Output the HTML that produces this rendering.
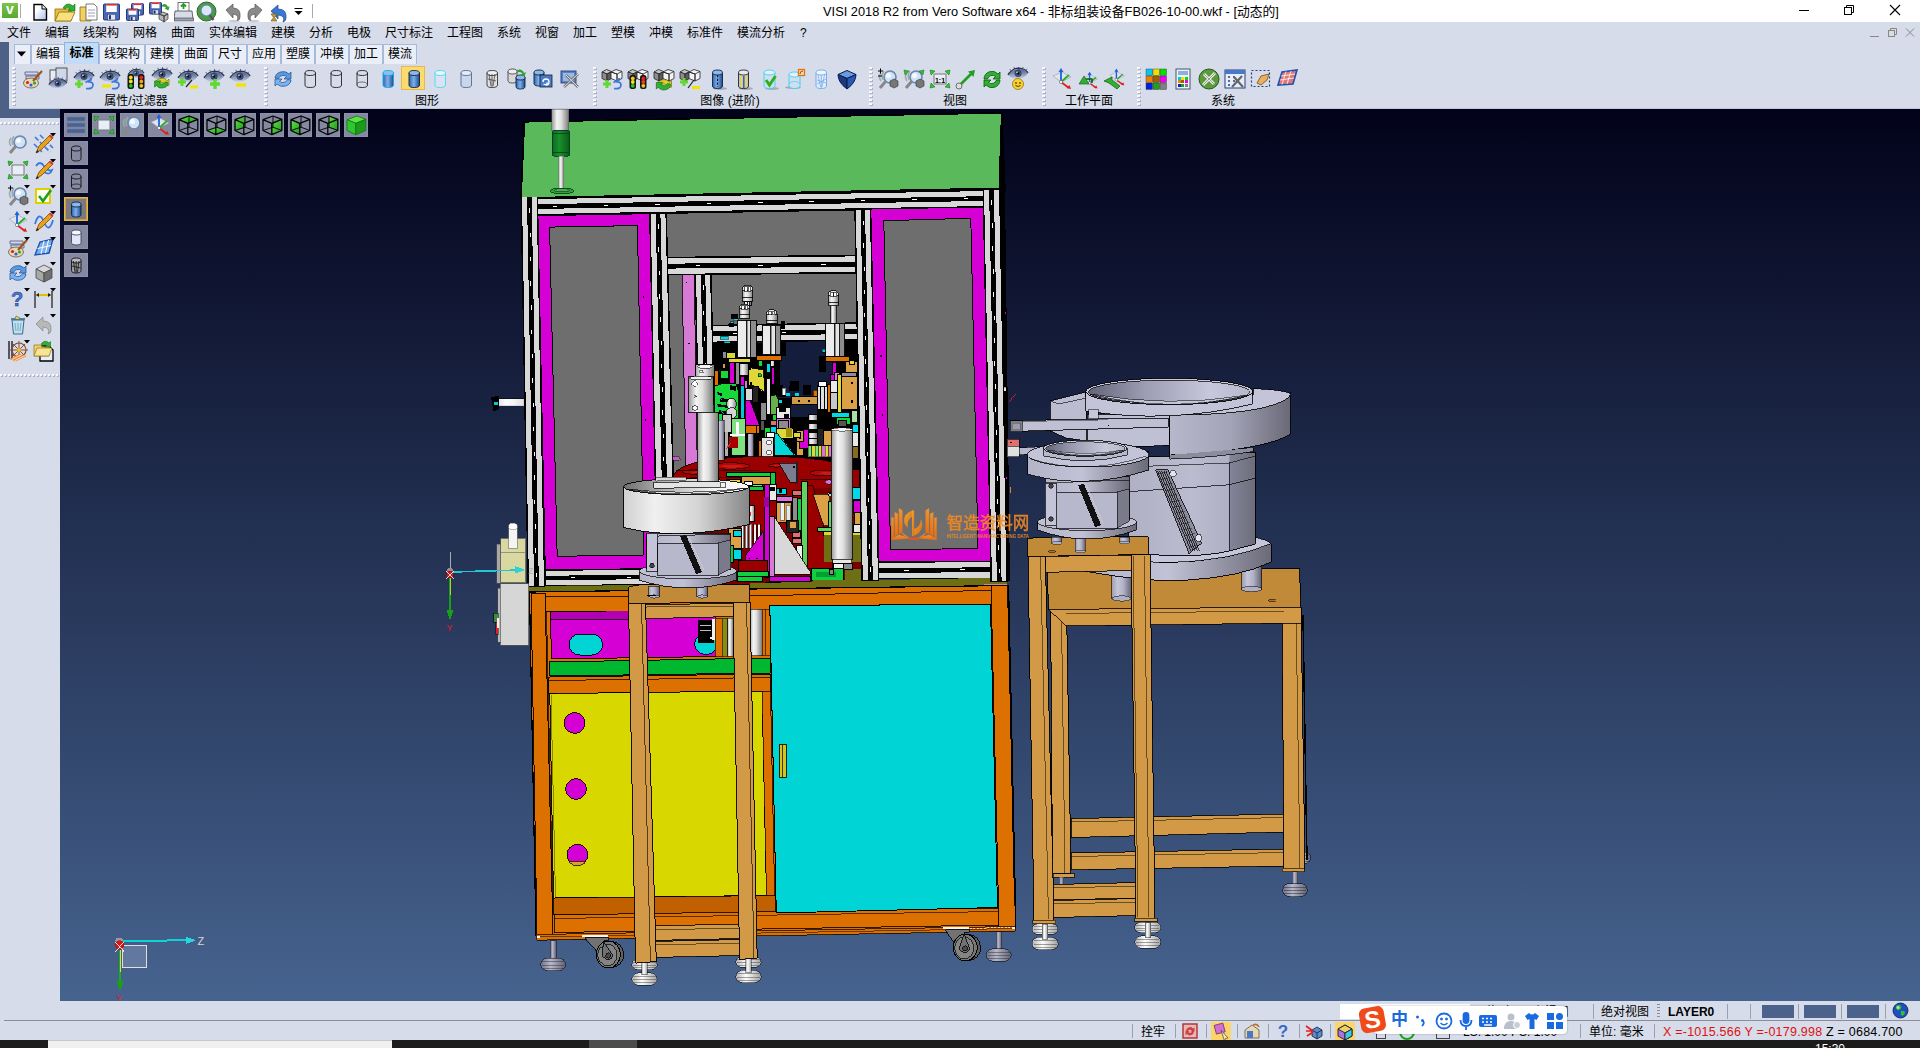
<!DOCTYPE html>
<html lang="zh-CN">
<head>
<meta charset="utf-8">
<title>VISI 2018 R2 from Vero Software x64</title>
<style>
*{box-sizing:border-box;margin:0;padding:0}
html,body{width:1920px;height:1048px;overflow:hidden;background:#d6dcea;
 font-family:"Liberation Sans","Noto Sans CJK SC",sans-serif;font-size:12px;color:#000}
.abs{position:absolute}
#titlebar{position:absolute;left:0;top:0;width:1920px;height:22px;background:#fff}
#title{position:absolute;left:823px;top:4px;width:456px;text-align:center;font-size:12.8px;line-height:16px;white-space:nowrap;letter-spacing:0px}
#menubar{position:absolute;left:0;top:22px;width:1920px;height:22px;background:#d6dcea}
#menubar span{position:absolute;top:4px;line-height:15px;font-size:12px;white-space:nowrap}
#tabs{position:absolute;left:9px;top:44px;width:1911px;height:20px;background:#d6dcea}
.tab{position:absolute;top:44px;height:20px;border:1px solid #a8bad6;border-bottom:none;background:#e9eef8;font-size:12px;line-height:19px;text-align:center;white-space:nowrap}
.tab.sel{background:#c2dcf7;border-color:#8fb4dc;top:42px;height:22px;line-height:20px;font-weight:bold}
#leftband{position:absolute;left:0;top:42px;width:9px;height:76px;background:#4d6186}
#leftband2{position:absolute;left:0;top:109px;width:60px;height:9px;background:#4d6186}
#toolbar{position:absolute;left:9px;top:64px;width:1911px;height:45px;background:#d6dcea}
.grp{position:absolute;top:101px;font-size:12px;line-height:14px;transform:translate(-50%,-50%);white-space:nowrap}
.sep{position:absolute;top:67px;width:3px;height:40px;background-image:repeating-linear-gradient(to bottom,#f8f9fc 0 2px,transparent 2px 4px);filter:drop-shadow(1px 1px 0 #aab2c6)}
#viewport{position:absolute;left:60px;top:109px;width:1860px;height:892px;background:linear-gradient(to bottom,#02021a 0%,#46638f 100%)}
#sidebar{position:absolute;left:0;top:118px;width:60px;height:902px;background:#d6dcea}
.hgrip{position:absolute;left:0;height:2px;width:58px;background-image:repeating-linear-gradient(to right,#f8f9fc 0 2px,transparent 2px 4px);filter:drop-shadow(1px 1px 0 #aab2c6)}
#status{position:absolute;left:0;top:1001px;width:1920px;height:39px;background:#d6dcea}
#taskbar{position:absolute;left:0;top:1040px;width:1920px;height:8px;background:#1c1c1c}
.vb{position:absolute;width:24px;height:24px;background:#8488a0;border:1px solid #8e92a8}
</style>
</head>
<body>
<div id="titlebar"></div>
<div id="title">VISI 2018 R2 from Vero Software x64 - 非标组装设备FB026-10-00.wkf - [动态的]</div>
<div id="menubar">
<span style="left:7px">文件</span><span style="left:45px">编辑</span><span style="left:83px">线架构</span><span style="left:133px">网格</span><span style="left:171px">曲面</span><span style="left:209px">实体编辑</span><span style="left:271px">建模</span><span style="left:309px">分析</span><span style="left:347px">电极</span><span style="left:385px">尺寸标注</span><span style="left:447px">工程图</span><span style="left:497px">系统</span><span style="left:535px">视窗</span><span style="left:573px">加工</span><span style="left:611px">塑模</span><span style="left:649px">冲模</span><span style="left:687px">标准件</span><span style="left:737px">模流分析</span><span style="left:800px">?</span>
</div>
<div id="tabs"></div>
<div id="toolbar"></div>
<div id="leftband"></div><div id="leftband2"></div>
<div id="viewport"></div>
<div id="sidebar"></div>
<div id="status"></div>
<div id="taskbar"></div>
<svg width="1920" height="1048" viewBox="0 0 1920 1048" style="position:absolute;left:0;top:0" shape-rendering="crispEdges"><defs>
<linearGradient id="cw" x1="0" x2="1"><stop offset="0" stop-color="#9a9a9a"/><stop offset="0.3" stop-color="#f4f4f4"/><stop offset="0.55" stop-color="#e0e0e0"/><stop offset="1" stop-color="#7c7c7c"/></linearGradient>
<linearGradient id="cl" x1="0" x2="1"><stop offset="0" stop-color="#9c9cb0"/><stop offset="0.3" stop-color="#c6c6da"/><stop offset="0.6" stop-color="#b0b0c6"/><stop offset="1" stop-color="#62626e"/></linearGradient>
<linearGradient id="cl2" x1="0" x2="1"><stop offset="0" stop-color="#b4b4c8"/><stop offset="0.45" stop-color="#c2c2d6"/><stop offset="1" stop-color="#6a6a78"/></linearGradient>
<linearGradient id="bowl" x1="0" x2="1"><stop offset="0" stop-color="#d0d0d0"/><stop offset="0.25" stop-color="#f0f0f0"/><stop offset="0.6" stop-color="#d4d4d4"/><stop offset="1" stop-color="#868686"/></linearGradient>
<linearGradient id="bowlin" x1="0" x2="1"><stop offset="0" stop-color="#6e6e6e"/><stop offset="0.3" stop-color="#b0b0b0"/><stop offset="0.7" stop-color="#f0f0f0"/><stop offset="1" stop-color="#fafafa"/></linearGradient>
<linearGradient id="red" x1="0" x2="1"><stop offset="0" stop-color="#960000"/><stop offset="0.35" stop-color="#c00808"/><stop offset="0.6" stop-color="#960000"/><stop offset="1" stop-color="#a00000"/></linearGradient>
<linearGradient id="gdk" x1="0" x2="1"><stop offset="0" stop-color="#0c6a1c"/><stop offset="0.4" stop-color="#18902c"/><stop offset="1" stop-color="#0a5a16"/></linearGradient>
<linearGradient id="foot" x1="0" x2="1"><stop offset="0" stop-color="#b0b0b0"/><stop offset="0.4" stop-color="#ffffff"/><stop offset="1" stop-color="#a0a0a0"/></linearGradient>
<linearGradient id="footd" x1="0" x2="1"><stop offset="0" stop-color="#70708a"/><stop offset="0.4" stop-color="#b8b8cc"/><stop offset="1" stop-color="#606074"/></linearGradient>
<linearGradient id="wm" x1="0" y1="0" x2="0" y2="1"><stop offset="0" stop-color="#ff9a2a"/><stop offset="1" stop-color="#ff6a00"/></linearGradient>
</defs>
<polygon points="524.4,121.8 1001.7,112.9 1005.0,190.0 999.5,188.5 521.0,198.0" fill="#000" stroke="#000" stroke-width="1.5" />
<polygon points="524.4,121.8 1001.7,112.9 999.3,188.3 521.0,198.0" fill="#5ab95a" stroke="#000" stroke-width="1.6" />
<rect x="551.9" y="109.0" width="16.8" height="21.5" fill="url(#cw)" stroke="#555" stroke-width="0.5" />
<rect x="552.4" y="130.3" width="17.4" height="25.8" fill="url(#gdk)" stroke="#033" stroke-width="0.8" rx="2"/>
<line x1="552.4" y1="133.0" x2="569.8" y2="133.0" stroke="#0a4a12" stroke-width="1" />
<line x1="553.0" y1="152.5" x2="570.0" y2="152.5" stroke="#0a4a12" stroke-width="1" />
<rect x="558.6" y="156.0" width="5.2" height="33.0" fill="url(#cw)" stroke="#666" stroke-width="0.4" />
<ellipse cx="562.0" cy="191.0" rx="11.8" ry="2.9" fill="#3a9a48" stroke="#0a4a12" stroke-width="0.9" />
<ellipse cx="562.0" cy="190.3" rx="7.5" ry="1.7" fill="#4aae56" stroke="#0a4a12" stroke-width="0.7" />
<polygon points="666.0,213.4 855.0,210.0 855.0,255.5 667.0,257.5" fill="#6e6e6e" stroke="#000" stroke-width="1" />
<polygon points="667.5,272.0 856.0,270.0 858.0,346.0 668.5,346.0" fill="#6e6e6e" stroke="none" stroke-width="0" />
<polygon points="668.0,272.0 712.0,272.0 716.0,480.0 672.0,480.0" fill="#6e6e6e" stroke="none" stroke-width="0" />
<polygon points="682.0,274.0 694.2,274.0 697.5,481.0 686.0,481.0" fill="#d67ad6" stroke="#000" stroke-width="0.8" />
<rect x="685.7" y="281.5" width="1.6" height="1.6" fill="#000" stroke="none" stroke-width="0" />
<rect x="688.3" y="342.5" width="1.6" height="1.6" fill="#000" stroke="none" stroke-width="0" />
<polygon points="712.5,342.0 857.5,340.0 860.0,470.0 715.0,470.0" fill="#000" stroke="none" stroke-width="0" />
<rect x="776.0" y="341.0" width="56.0" height="57.0" fill="#151d3d" stroke="none" stroke-width="0" />
<rect x="791.0" y="404.5" width="26.0" height="12.5" fill="#151d3d" stroke="none" stroke-width="0" />
<rect x="712.5" y="344.0" width="11.5" height="19.0" fill="#151d3d" stroke="none" stroke-width="0" />
<rect x="757.0" y="342.0" width="20.0" height="14.0" fill="#151d3d" stroke="none" stroke-width="0" />
<rect x="716.0" y="363.0" width="6.0" height="9.0" fill="#151d3d" stroke="none" stroke-width="0" />
<polygon points="711.0,325.3 857.0,322.8 857.3,340.2 711.3,342.6" fill="#000" stroke="#000" stroke-width="1" />
<polygon points="711.0,326.3 857.0,323.8 857.1,329.1 711.1,331.5" fill="#d8d8d8" stroke="none" stroke-width="0" />
<polygon points="711.2,336.4 857.2,333.9 857.3,339.2 711.3,341.6" fill="#d8d8d8" stroke="none" stroke-width="0" />
<line x1="733.0" y1="333.6" x2="737.5" y2="333.5" stroke="#fff" stroke-width="1" />
<line x1="781.7" y1="332.8" x2="786.2" y2="332.7" stroke="#fff" stroke-width="1" />
<line x1="830.4" y1="331.9" x2="834.9" y2="331.9" stroke="#fff" stroke-width="1" />
<polygon points="695.0,273.5 699.5,480.0 716.5,480.0 711.0,273.5" fill="#000" stroke="#000" stroke-width="1" />
<polygon points="696.0,273.5 700.5,480.0 705.6,480.0 700.8,273.5" fill="#d8d8d8" stroke="none" stroke-width="0" />
<polygon points="705.2,273.5 710.4,480.0 715.5,480.0 710.0,273.5" fill="#d8d8d8" stroke="none" stroke-width="0" />
<line x1="703.3" y1="285.1" x2="703.4" y2="289.6" stroke="#fff" stroke-width="1" />
<line x1="703.9" y1="310.9" x2="704.0" y2="315.4" stroke="#fff" stroke-width="1" />
<line x1="704.5" y1="336.7" x2="704.6" y2="341.2" stroke="#fff" stroke-width="1" />
<line x1="705.2" y1="362.6" x2="705.3" y2="367.1" stroke="#fff" stroke-width="1" />
<line x1="705.8" y1="388.4" x2="705.9" y2="392.9" stroke="#fff" stroke-width="1" />
<line x1="706.4" y1="414.2" x2="706.5" y2="418.7" stroke="#fff" stroke-width="1" />
<line x1="707.0" y1="440.0" x2="707.1" y2="444.5" stroke="#fff" stroke-width="1" />
<line x1="707.7" y1="465.8" x2="707.8" y2="470.3" stroke="#fff" stroke-width="1" />
<polygon points="667.3,257.3 855.2,255.3 855.6,273.0 667.8,275.0" fill="#000" stroke="#000" stroke-width="1" />
<polygon points="667.3,258.4 855.2,256.4 855.3,261.7 667.5,263.7" fill="#d8d8d8" stroke="none" stroke-width="0" />
<polygon points="667.6,268.6 855.5,266.6 855.6,271.9 667.8,273.9" fill="#d8d8d8" stroke="none" stroke-width="0" />
<line x1="695.7" y1="265.8" x2="700.2" y2="265.8" stroke="#fff" stroke-width="1" />
<line x1="758.3" y1="265.2" x2="762.8" y2="265.1" stroke="#fff" stroke-width="1" />
<line x1="821.0" y1="264.5" x2="825.5" y2="264.5" stroke="#fff" stroke-width="1" />
<rect x="744.5" y="301.0" width="6.5" height="4.0" fill="#8c8c8c" stroke="#000" stroke-width="0.9" />
<rect x="745.0" y="301.5" width="2.7" height="3.0" fill="#ececec" stroke="none" stroke-width="0" />
<rect x="748.1" y="301.5" width="0.8" height="3.0" fill="#e4e4e4" stroke="none" stroke-width="0" />
<line x1="747.6" y1="301.0" x2="747.6" y2="305.0" stroke="#000" stroke-width="0.8" />
<line x1="749.2" y1="301.0" x2="749.2" y2="305.0" stroke="#000" stroke-width="0.8" />
<path d="M742.3,301.0 L742.3,290.6 Q742.3,285.0 747.6,285.0 Q752.9,285.0 752.9,290.6 Z M742.3,301.0" fill="#e8e8e8" stroke="#000" stroke-width="0.8" />
<rect x="742.3" y="290.6" width="10.6" height="10.4" fill="url(#cw)" stroke="#000" stroke-width="0.8" />
<rect x="744.6" y="286.9" width="2.6" height="4.2" fill="#fff" stroke="#000" stroke-width="0.6" />
<rect x="748.1" y="286.9" width="2.6" height="4.2" fill="#fff" stroke="#000" stroke-width="0.6" />
<line x1="742.3" y1="297.5" x2="752.9" y2="297.5" stroke="#000" stroke-width="0.8" />
<rect x="830.8" y="305.0" width="5.4" height="18.5" fill="url(#cw)" stroke="#000" stroke-width="0.7" />
<rect x="825.5" y="323.0" width="19.1" height="33.0" fill="#8c8c8c" stroke="#000" stroke-width="0.9" />
<rect x="826.0" y="323.5" width="8.0" height="32.0" fill="#ececec" stroke="none" stroke-width="0" />
<rect x="836.0" y="323.5" width="2.5" height="32.0" fill="#e4e4e4" stroke="none" stroke-width="0" />
<line x1="834.7" y1="323.0" x2="834.7" y2="356.0" stroke="#000" stroke-width="0.8" />
<line x1="839.3" y1="323.0" x2="839.3" y2="356.0" stroke="#000" stroke-width="0.8" />
<path d="M828.0,305.6 L828.0,295.7 Q828.0,290.4 833.4,290.4 Q838.8,290.4 838.8,295.7 Z M828.0,305.6" fill="#e8e8e8" stroke="#000" stroke-width="0.8" />
<rect x="828.0" y="295.7" width="10.8" height="9.9" fill="url(#cw)" stroke="#000" stroke-width="0.8" />
<rect x="830.4" y="292.2" width="2.7" height="4.0" fill="#fff" stroke="#000" stroke-width="0.6" />
<rect x="833.9" y="292.2" width="2.7" height="4.0" fill="#fff" stroke="#000" stroke-width="0.6" />
<line x1="828.0" y1="302.3" x2="838.8" y2="302.3" stroke="#000" stroke-width="0.8" />
<rect x="733.0" y="318.0" width="5.0" height="2.5" fill="#00d8e8" stroke="#000" stroke-width="0.5" />
<rect x="730.0" y="321.5" width="3.0" height="2.0" fill="#00d8e8" stroke="#000" stroke-width="0.5" />
<rect x="720.0" y="336.0" width="8.0" height="3.0" fill="#00d8e8" stroke="#000" stroke-width="0.5" />
<rect x="724.0" y="341.0" width="6.0" height="4.0" fill="#00d8e8" stroke="#000" stroke-width="0.5" />
<rect x="730.0" y="346.0" width="5.0" height="3.0" fill="#00d8e8" stroke="#000" stroke-width="0.5" />
<rect x="722.0" y="350.0" width="4.0" height="3.0" fill="#00d8e8" stroke="#000" stroke-width="0.5" />
<rect x="777.0" y="328.0" width="3.0" height="3.0" fill="#00d8e8" stroke="#000" stroke-width="0.5" />
<rect x="779.0" y="346.0" width="4.0" height="3.0" fill="#00d8e8" stroke="#000" stroke-width="0.5" />
<rect x="781.0" y="351.0" width="3.0" height="3.0" fill="#00d8e8" stroke="#000" stroke-width="0.5" />
<rect x="822.0" y="349.0" width="3.0" height="3.0" fill="#00d8e8" stroke="#000" stroke-width="0.5" />
<rect x="735.0" y="343.0" width="3.0" height="5.0" fill="#00d8e8" stroke="#000" stroke-width="0.5" />
<rect x="731.0" y="314.0" width="7.0" height="5.0" fill="#000" stroke="none" stroke-width="0" />
<rect x="729.0" y="323.0" width="5.0" height="4.0" fill="#000" stroke="none" stroke-width="0" />
<rect x="781.0" y="321.0" width="4.0" height="8.0" fill="#000" stroke="none" stroke-width="0" />
<rect x="713.0" y="343.0" width="24.0" height="15.0" fill="#000" stroke="none" stroke-width="0" />
<rect x="713.0" y="358.0" width="16.0" height="12.0" fill="#000" stroke="none" stroke-width="0" />
<rect x="734.0" y="356.0" width="7.0" height="8.0" fill="#000" stroke="none" stroke-width="0" />
<rect x="756.0" y="343.0" width="7.0" height="14.0" fill="#000" stroke="none" stroke-width="0" />
<rect x="780.0" y="340.0" width="6.0" height="16.0" fill="#000" stroke="none" stroke-width="0" />
<rect x="756.0" y="360.0" width="10.0" height="40.0" fill="#000" stroke="none" stroke-width="0" />
<rect x="774.0" y="360.0" width="6.0" height="36.0" fill="#000" stroke="none" stroke-width="0" />
<rect x="845.0" y="343.0" width="13.0" height="17.0" fill="#000" stroke="none" stroke-width="0" />
<rect x="819.0" y="356.0" width="7.0" height="16.0" fill="#000" stroke="none" stroke-width="0" />
<rect x="790.0" y="381.0" width="9.0" height="10.0" fill="#000" stroke="none" stroke-width="0" />
<rect x="803.0" y="385.0" width="8.0" height="10.0" fill="#000" stroke="none" stroke-width="0" />
<rect x="737.0" y="320.0" width="19.0" height="37.0" fill="#8c8c8c" stroke="#000" stroke-width="0.9" />
<rect x="737.5" y="320.5" width="8.0" height="36.0" fill="#ececec" stroke="none" stroke-width="0" />
<rect x="747.5" y="320.5" width="2.5" height="36.0" fill="#e4e4e4" stroke="none" stroke-width="0" />
<line x1="746.1" y1="320.0" x2="746.1" y2="357.0" stroke="#000" stroke-width="0.8" />
<line x1="750.7" y1="320.0" x2="750.7" y2="357.0" stroke="#000" stroke-width="0.8" />
<path d="M739.2,318.0 L739.2,308.9 Q739.2,304.0 744.5,304.0 Q749.8,304.0 749.8,308.9 Z M739.2,318.0" fill="#e8e8e8" stroke="#000" stroke-width="0.8" />
<rect x="739.2" y="308.9" width="10.6" height="9.1" fill="url(#cw)" stroke="#000" stroke-width="0.8" />
<rect x="741.5" y="305.7" width="2.6" height="3.6" fill="#fff" stroke="#000" stroke-width="0.6" />
<rect x="745.0" y="305.7" width="2.6" height="3.6" fill="#fff" stroke="#000" stroke-width="0.6" />
<line x1="739.2" y1="314.9" x2="749.8" y2="314.9" stroke="#000" stroke-width="0.8" />
<rect x="762.0" y="325.5" width="18.5" height="29.0" fill="#8c8c8c" stroke="#000" stroke-width="0.9" />
<rect x="762.5" y="326.0" width="7.8" height="28.0" fill="#ececec" stroke="none" stroke-width="0" />
<rect x="772.2" y="326.0" width="2.4" height="28.0" fill="#e4e4e4" stroke="none" stroke-width="0" />
<line x1="770.9" y1="325.5" x2="770.9" y2="354.5" stroke="#000" stroke-width="0.8" />
<line x1="775.3" y1="325.5" x2="775.3" y2="354.5" stroke="#000" stroke-width="0.8" />
<path d="M766.4,323.0 L766.4,314.2 Q766.4,309.5 771.7,309.5 Q777.0,309.5 777.0,314.2 Z M766.4,323.0" fill="#e8e8e8" stroke="#000" stroke-width="0.8" />
<rect x="766.4" y="314.2" width="10.6" height="8.8" fill="url(#cw)" stroke="#000" stroke-width="0.8" />
<rect x="768.7" y="311.1" width="2.6" height="3.5" fill="#fff" stroke="#000" stroke-width="0.6" />
<rect x="772.2" y="311.1" width="2.6" height="3.5" fill="#fff" stroke="#000" stroke-width="0.6" />
<line x1="766.4" y1="320.0" x2="777.0" y2="320.0" stroke="#000" stroke-width="0.8" />
<rect x="756.8" y="355.5" width="24.4" height="5.1" fill="#dc7000" stroke="#000" stroke-width="1" />
<rect x="825.5" y="356.5" width="23.5" height="5.1" fill="#dc7000" stroke="#000" stroke-width="1" />
<rect x="728.8" y="358.3" width="21.6" height="3.9" fill="#e0d838" stroke="#000" stroke-width="1" />
<rect x="722.0" y="351.0" width="5.0" height="7.0" fill="#8888a0" stroke="#000" stroke-width="1" />
<rect x="722.0" y="363.4" width="3.6" height="4.6" fill="#d29a46" stroke="#000" stroke-width="1" />
<rect x="726.0" y="352.0" width="9.0" height="6.0" fill="#d8d838" stroke="#000" stroke-width="1" />
<rect x="714.8" y="370.0" width="4.0" height="16.0" fill="#dc7000" stroke="#000" stroke-width="1" />
<rect x="729.5" y="362.7" width="4.5" height="20.3" fill="#d400d4" stroke="#000" stroke-width="1" />
<rect x="720.0" y="370.0" width="8.0" height="8.7" fill="#18d838" stroke="#000" stroke-width="1" />
<rect x="739.5" y="363.0" width="8.5" height="12.0" fill="url(#cw)" stroke="#000" stroke-width="1" />
<rect x="735.0" y="362.0" width="4.0" height="22.0" fill="#8c8c8c" stroke="#000" stroke-width="1" />
<polygon points="714.8,386.0 722.0,383.5 736.0,384.0 738.8,392.0 738.8,418.0 726.0,420.0 714.8,420.0" fill="#18d838" stroke="#000" stroke-width="0.9" />
<polygon points="730.0,385.0 736.0,386.5 736.0,391.0 730.0,389.5" fill="#000" stroke="none" stroke-width="0" />
<polygon points="717.0,392.0 722.0,393.5 722.0,396.0 717.0,394.5" fill="#000" stroke="none" stroke-width="0" />
<polygon points="720.0,398.0 733.0,399.5 733.0,403.0 720.0,401.5" fill="#000" stroke="none" stroke-width="0" />
<polygon points="717.0,404.0 729.0,405.5 729.0,408.0 717.0,406.5" fill="#000" stroke="none" stroke-width="0" />
<polygon points="719.0,410.0 727.0,411.5 727.0,415.0 719.0,413.5" fill="#000" stroke="none" stroke-width="0" />
<line x1="716.0" y1="392.0" x2="722.0" y2="400.0" stroke="#00c8d8" stroke-width="0.8" />
<line x1="716.0" y1="404.0" x2="724.0" y2="414.0" stroke="#00c8d8" stroke-width="0.8" />
<ellipse cx="731.5" cy="404.0" rx="5.0" ry="5.5" fill="url(#cw)" stroke="#000" stroke-width="0.7" />
<ellipse cx="731.5" cy="413.0" rx="5.4" ry="5.2" fill="#d4d4d4" stroke="#000" stroke-width="0.7" />
<polygon points="748.8,367.4 763.5,370.0 764.9,392.5 759.5,389.4 753.5,386.0 748.8,385.4" fill="#e0d838" stroke="#000" stroke-width="0.9" />
<ellipse cx="759.8" cy="375.3" rx="1.8" ry="1.8" fill="#18c838" stroke="#000" stroke-width="0.6" />
<rect x="748.5" y="368.0" width="2.0" height="2.0" fill="#000" stroke="none" stroke-width="0" />
<rect x="749.5" y="382.0" width="2.5" height="2.5" fill="#000" stroke="none" stroke-width="0" />
<rect x="758.2" y="360.7" width="4.0" height="5.3" fill="#18d838" stroke="#000" stroke-width="1" />
<rect x="766.9" y="363.4" width="4.0" height="8.6" fill="#00d8e8" stroke="#000" stroke-width="1" />
<rect x="770.2" y="360.7" width="4.7" height="5.8" fill="url(#cw)" stroke="#000" stroke-width="1" />
<rect x="771.5" y="367.4" width="3.4" height="16.6" fill="#d400d4" stroke="#000" stroke-width="1" />
<rect x="766.9" y="378.7" width="4.0" height="35.3" fill="#e8e8e8" stroke="#000" stroke-width="1" />
<rect x="740.5" y="376.0" width="3.5" height="16.0" fill="#d400d4" stroke="#000" stroke-width="1" />
<rect x="744.0" y="380.0" width="3.5" height="12.0" fill="#e070e0" stroke="#000" stroke-width="1" />
<rect x="740.0" y="385.4" width="4.8" height="40.1" fill="#00c8d8" stroke="#000" stroke-width="1" />
<rect x="745.0" y="388.0" width="7.0" height="12.0" fill="#d8d8d8" stroke="#000" stroke-width="1" />
<rect x="752.0" y="386.0" width="6.0" height="16.0" fill="#222" stroke="#000" stroke-width="1" />
<polygon points="745.0,400.0 750.0,400.0 759.5,425.5 745.0,425.5" fill="#d400d4" stroke="#000" stroke-width="0.8" />
<rect x="760.0" y="402.0" width="6.0" height="18.0" fill="#8c8c8c" stroke="#000" stroke-width="1" />
<rect x="760.0" y="420.0" width="4.0" height="10.0" fill="#555" stroke="#000" stroke-width="1" />
<rect x="740.8" y="425.5" width="18.7" height="8.0" fill="#dc7000" stroke="#000" stroke-width="1" />
<line x1="745.0" y1="425.5" x2="745.0" y2="433.5" stroke="#000" stroke-width="1" />
<line x1="756.0" y1="425.5" x2="756.0" y2="433.5" stroke="#000" stroke-width="1" />
<rect x="747.5" y="433.5" width="6.0" height="37.5" fill="url(#cl)" stroke="#000" stroke-width="0.6" />
<line x1="747.5" y1="465.0" x2="753.5" y2="465.0" stroke="#20a040" stroke-width="0.8" />
<line x1="747.5" y1="468.0" x2="753.5" y2="468.0" stroke="#20a040" stroke-width="0.8" />
<rect x="731.5" y="418.8" width="14.0" height="36.2" fill="#7ee07e" stroke="#000" stroke-width="1" />
<rect x="736.0" y="422.0" width="2.6" height="14.0" fill="#fff" stroke="none" stroke-width="0" />
<rect x="730.0" y="433.5" width="15.0" height="2.8" fill="#fff" stroke="none" stroke-width="0" />
<rect x="728.8" y="436.8" width="9.2" height="11.4" fill="#a80000" stroke="none" stroke-width="0" />
<rect x="725.5" y="432.0" width="3.3" height="15.0" fill="#dc7000" stroke="#000" stroke-width="1" />
<rect x="722.0" y="414.0" width="9.0" height="18.0" fill="#c8c8c8" stroke="#000" stroke-width="1" />
<rect x="725.0" y="432.0" width="3.0" height="24.0" fill="#b0b0b0" stroke="none" stroke-width="0" />
<line x1="726.0" y1="449.0" x2="731.0" y2="443.0" stroke="#e03030" stroke-width="1" />
<polygon points="770.9,396.0 776.0,394.8 778.2,399.0 778.2,414.8 770.9,414.8" fill="#6ab04a" stroke="#000" stroke-width="0.8" />
<rect x="772.0" y="414.8" width="10.0" height="5.2" fill="#18d838" stroke="#000" stroke-width="1" />
<rect x="770.0" y="420.0" width="16.0" height="5.0" fill="#e07070" stroke="#000" stroke-width="1" />
<rect x="776.0" y="407.0" width="14.0" height="18.0" fill="#e8e8e8" stroke="#000" stroke-width="1" />
<rect x="778.0" y="392.0" width="8.0" height="5.0" fill="#000" stroke="none" stroke-width="0" />
<rect x="782.0" y="399.0" width="6.0" height="4.0" fill="#000" stroke="none" stroke-width="0" />
<rect x="779.0" y="408.0" width="7.0" height="4.0" fill="#000" stroke="none" stroke-width="0" />
<rect x="784.0" y="414.0" width="5.0" height="5.0" fill="#000" stroke="none" stroke-width="0" />
<rect x="789.0" y="386.0" width="5.0" height="5.0" fill="#000" stroke="none" stroke-width="0" />
<rect x="780.0" y="385.0" width="3.0" height="8.0" fill="#000" stroke="none" stroke-width="0" />
<rect x="782.0" y="388.0" width="3.5" height="7.0" fill="#fff" stroke="#000" stroke-width="0.5" />
<rect x="786.0" y="393.0" width="4.0" height="3.0" fill="#00d8e8" stroke="none" stroke-width="0" />
<rect x="779.0" y="400.0" width="3.0" height="3.0" fill="#00d8e8" stroke="none" stroke-width="0" />
<rect x="795.0" y="393.0" width="4.0" height="3.0" fill="#00d8e8" stroke="none" stroke-width="0" />
<rect x="776.0" y="418.0" width="14.0" height="14.0" fill="#e070e0" stroke="#000" stroke-width="1" />
<rect x="778.0" y="420.0" width="10.0" height="8.0" fill="#8c8c8c" stroke="#000" stroke-width="1" />
<rect x="791.6" y="396.8" width="26.0" height="8.0" fill="#d29a46" stroke="#000" stroke-width="1" />
<rect x="798.0" y="399.5" width="2.0" height="2.0" fill="#000" stroke="none" stroke-width="0" />
<rect x="808.0" y="400.0" width="1.5" height="1.5" fill="#000" stroke="none" stroke-width="0" />
<rect x="813.0" y="390.0" width="4.6" height="6.0" fill="#dc7000" stroke="#000" stroke-width="0.6" />
<rect x="817.6" y="385.4" width="9.4" height="24.1" fill="#e0e0e0" stroke="#000" stroke-width="1" />
<line x1="820.0" y1="385.4" x2="820.0" y2="409.5" stroke="#000" stroke-width="1" />
<line x1="824.0" y1="385.4" x2="824.0" y2="409.5" stroke="#000" stroke-width="1" />
<rect x="818.0" y="381.0" width="8.0" height="5.0" fill="#fff" stroke="#000" stroke-width="1" />
<rect x="827.0" y="384.0" width="3.3" height="28.0" fill="#dc7000" stroke="#000" stroke-width="1" />
<rect x="832.3" y="362.0" width="4.0" height="13.0" fill="#d400d4" stroke="#000" stroke-width="1" />
<rect x="834.0" y="372.0" width="5.0" height="12.0" fill="#e070e0" stroke="#000" stroke-width="1" />
<rect x="830.0" y="374.0" width="4.0" height="6.0" fill="#d400d4" stroke="#000" stroke-width="1" />
<rect x="830.0" y="380.0" width="8.0" height="12.0" fill="#e8e8e8" stroke="#000" stroke-width="1" />
<rect x="830.0" y="392.0" width="7.0" height="17.0" fill="#c8c8c8" stroke="#000" stroke-width="1" />
<rect x="837.7" y="374.7" width="4.0" height="37.3" fill="#e0d838" stroke="#000" stroke-width="1" />
<rect x="841.7" y="376.7" width="16.0" height="32.8" fill="#dca046" stroke="#000" stroke-width="1" />
<rect x="851.0" y="381.5" width="2.0" height="2.0" fill="#000" stroke="none" stroke-width="0" />
<rect x="851.0" y="400.0" width="1.5" height="3.0" fill="#000" stroke="none" stroke-width="0" />
<rect x="845.0" y="361.4" width="12.0" height="10.6" fill="#dca046" stroke="#000" stroke-width="1" />
<rect x="849.7" y="360.0" width="4.7" height="4.7" fill="#e0d838" stroke="#000" stroke-width="1" />
<rect x="841.0" y="372.0" width="15.0" height="4.7" fill="#8c8ca0" stroke="#000" stroke-width="1" />
<rect x="831.0" y="412.0" width="18.7" height="5.5" fill="#00d8e8" stroke="#000" stroke-width="1" />
<rect x="851.0" y="410.8" width="6.7" height="12.0" fill="#a8e0a0" stroke="#000" stroke-width="1" />
<rect x="836.0" y="417.5" width="14.0" height="6.5" fill="#18d838" stroke="#000" stroke-width="1" />
<rect x="838.0" y="420.0" width="8.0" height="6.0" fill="#555" stroke="#000" stroke-width="1" />
<rect x="808.3" y="414.0" width="8.7" height="6.5" fill="url(#cw)" stroke="#000" stroke-width="1" />
<rect x="808.3" y="423.0" width="8.7" height="6.5" fill="url(#cw)" stroke="#000" stroke-width="1" />
<rect x="808.3" y="432.0" width="8.7" height="6.5" fill="url(#cw)" stroke="#000" stroke-width="1" />
<rect x="808.3" y="438.0" width="8.7" height="6.5" fill="url(#cw)" stroke="#000" stroke-width="1" />
<rect x="817.0" y="428.0" width="6.0" height="18.0" fill="#222" stroke="#000" stroke-width="1" />
<rect x="823.6" y="430.0" width="8.7" height="15.5" fill="#dca046" stroke="#000" stroke-width="1" />
<rect x="852.4" y="424.0" width="5.6" height="8.0" fill="#00d8e8" stroke="#000" stroke-width="1" />
<rect x="852.4" y="432.0" width="5.6" height="14.0" fill="#e8e8e8" stroke="#000" stroke-width="1" />
<rect x="852.4" y="446.0" width="5.6" height="12.0" fill="#8a6a20" stroke="#000" stroke-width="1" />
<rect x="776.2" y="428.0" width="17.4" height="10.8" fill="#e0d838" stroke="#000" stroke-width="1" />
<rect x="786.0" y="428.0" width="6.0" height="9.0" fill="#a09010" stroke="none" stroke-width="0" />
<rect x="770.0" y="426.0" width="6.0" height="18.0" fill="#00d8e8" stroke="#000" stroke-width="1" />
<rect x="764.0" y="427.0" width="6.0" height="13.0" fill="#18d838" stroke="#000" stroke-width="1" />
<rect x="758.2" y="440.0" width="3.3" height="20.0" fill="#dc7000" stroke="#000" stroke-width="1" />
<rect x="761.5" y="437.5" width="12.0" height="20.0" fill="#e0e0e0" stroke="#000" stroke-width="1" />
<ellipse cx="769.0" cy="442.5" rx="2.6" ry="2.6" fill="#fff" stroke="#000" stroke-width="0.6" />
<ellipse cx="769.0" cy="452.5" rx="2.6" ry="2.6" fill="#fff" stroke="#000" stroke-width="0.6" />
<rect x="766.0" y="432.0" width="8.0" height="5.5" fill="#fff" stroke="#000" stroke-width="1" />
<polygon points="774.9,433.5 778.0,433.5 795.0,455.0 774.9,455.0" fill="#00d8d8" stroke="#000" stroke-width="0.8" />
<rect x="796.3" y="433.5" width="6.7" height="21.5" fill="#dca046" stroke="#000" stroke-width="1" />
<rect x="799.0" y="429.5" width="9.3" height="18.7" fill="#d400d4" stroke="#000" stroke-width="1" />
<rect x="796.3" y="430.0" width="6.7" height="11.0" fill="#dca046" stroke="#000" stroke-width="1" />
<rect x="798.5" y="436.5" width="2.0" height="2.0" fill="#000" stroke="none" stroke-width="0" />
<rect x="793.6" y="432.0" width="6.4" height="5.0" fill="#e0d838" stroke="#000" stroke-width="1" />
<rect x="774.9" y="457.5" width="20.1" height="4.0" fill="#dca046" stroke="#000" stroke-width="1" />
<rect x="808.3" y="445.5" width="3.4" height="11.0" fill="#7ee07e" stroke="#000" stroke-width="0.4" />
<rect x="811.7" y="445.5" width="3.4" height="11.0" fill="#e0d838" stroke="#000" stroke-width="0.4" />
<rect x="815.1" y="445.5" width="3.4" height="11.0" fill="#7ee07e" stroke="#000" stroke-width="0.4" />
<rect x="818.5" y="445.5" width="3.4" height="11.0" fill="#e0d838" stroke="#000" stroke-width="0.4" />
<rect x="821.9" y="445.5" width="3.4" height="11.0" fill="#e070e0" stroke="#000" stroke-width="0.4" />
<rect x="825.3" y="445.5" width="3.4" height="11.0" fill="#e0d838" stroke="#000" stroke-width="0.4" />
<rect x="828.7" y="445.5" width="3.4" height="11.0" fill="#e070e0" stroke="#000" stroke-width="0.4" />
<rect x="756.0" y="460.0" width="8.0" height="6.0" fill="#00d8d8" stroke="#000" stroke-width="1" />
<path d="M672,480 Q672,457 766,456.5 Q860,457 860,480 L860,500 L672,500 Z" fill="#9a0000" stroke="#000" stroke-width="0.8" />
<ellipse cx="730.0" cy="466.0" rx="20.0" ry="3.2" fill="#b40808" stroke="#000" stroke-width="0.6" />
<ellipse cx="732.0" cy="466.3" rx="11.0" ry="1.4" fill="#cc1818" stroke="none" stroke-width="0" />
<ellipse cx="776.0" cy="465.5" rx="8.0" ry="1.6" fill="#b40808" stroke="#000" stroke-width="0.6" />
<ellipse cx="778.0" cy="465.8" rx="4.4" ry="0.7" fill="#cc1818" stroke="none" stroke-width="0" />
<ellipse cx="826.0" cy="473.0" rx="16.0" ry="3.0" fill="#b40808" stroke="#000" stroke-width="0.6" />
<ellipse cx="828.0" cy="473.3" rx="8.8" ry="1.4" fill="#cc1818" stroke="none" stroke-width="0" />
<ellipse cx="700.0" cy="472.0" rx="18.0" ry="2.5" fill="#b40808" stroke="#000" stroke-width="0.6" />
<ellipse cx="702.0" cy="472.3" rx="9.9" ry="1.1" fill="#cc1818" stroke="none" stroke-width="0" />
<line x1="676.0" y1="470.0" x2="760.0" y2="470.0" stroke="#000" stroke-width="0.6" />
<line x1="800.0" y1="480.0" x2="860.0" y2="479.0" stroke="#000" stroke-width="0.6" />
<line x1="690.0" y1="477.0" x2="745.0" y2="477.0" stroke="#000" stroke-width="0.5" />
<polygon points="778.9,463.0 796.3,463.0 796.3,482.0 790.0,482.0" fill="#7c7c90" stroke="#000" stroke-width="0.7" />
<rect x="793.0" y="466.0" width="1.6" height="1.6" fill="#000" stroke="none" stroke-width="0" />
<line x1="797.0" y1="462.0" x2="797.0" y2="484.0" stroke="#222" stroke-width="1.2" />
<ellipse cx="676.0" cy="458.5" rx="4.0" ry="2.4" fill="#c060c0" stroke="#000" stroke-width="0.5" />
<rect x="672.0" y="488.0" width="190.0" height="98.0" fill="#7a0000" stroke="none" stroke-width="0" />
<rect x="745.0" y="486.0" width="63.0" height="44.0" fill="#9a0000" stroke="none" stroke-width="0" />
<rect x="726.8" y="472.8" width="48.2" height="3.2" fill="#10d040" stroke="#000" stroke-width="1" />
<rect x="770.0" y="472.8" width="5.0" height="17.6" fill="#10d040" stroke="#000" stroke-width="1" />
<rect x="740.0" y="484.0" width="22.0" height="3.0" fill="#7ee07e" stroke="#000" stroke-width="1" />
<rect x="726.8" y="483.0" width="17.2" height="4.5" fill="#10d040" stroke="#000" stroke-width="1" />
<rect x="726.8" y="479.0" width="13.7" height="3.7" fill="#e0d838" stroke="#000" stroke-width="1" />
<rect x="741.0" y="476.5" width="29.0" height="7.5" fill="#dca046" stroke="#000" stroke-width="1" />
<rect x="744.0" y="481.0" width="8.0" height="4.0" fill="#fff" stroke="#000" stroke-width="1" />
<rect x="749.0" y="486.8" width="14.0" height="3.6" fill="#10d040" stroke="#000" stroke-width="1" />
<rect x="749.0" y="505.0" width="5.3" height="16.7" fill="url(#cw)" stroke="#000" stroke-width="1" />
<rect x="749.0" y="512.0" width="2.0" height="4.0" fill="#e03030" stroke="none" stroke-width="0" />
<rect x="741.0" y="524.0" width="2.5" height="24.0" fill="#f0f0f0" stroke="#000" stroke-width="0.5" />
<rect x="745.2" y="524.0" width="2.5" height="24.0" fill="#f0f0f0" stroke="#000" stroke-width="0.5" />
<rect x="749.4" y="524.0" width="2.5" height="24.0" fill="#f0f0f0" stroke="#000" stroke-width="0.5" />
<rect x="753.6" y="524.0" width="2.5" height="24.0" fill="#f0f0f0" stroke="#000" stroke-width="0.5" />
<rect x="757.8" y="524.0" width="2.5" height="24.0" fill="#f0f0f0" stroke="#000" stroke-width="0.5" />
<rect x="728.5" y="528.0" width="12.5" height="20.0" fill="#dca046" stroke="#000" stroke-width="1" />
<rect x="733.0" y="530.0" width="8.0" height="6.0" fill="#00d8e8" stroke="#000" stroke-width="1" />
<rect x="731.0" y="549.0" width="10.0" height="10.0" fill="#00d8e8" stroke="#000" stroke-width="1" />
<rect x="729.0" y="545.0" width="4.0" height="17.0" fill="#10d040" stroke="#000" stroke-width="1" />
<rect x="764.0" y="484.0" width="5.5" height="93.0" fill="#d400d4" stroke="#000" stroke-width="1" />
<rect x="764.0" y="497.0" width="4.5" height="10.0" fill="#a000a0" stroke="none" stroke-width="0" />
<rect x="769.5" y="516.0" width="4.5" height="61.0" fill="#d67ad6" stroke="#000" stroke-width="1" />
<polygon points="745.0,556.0 763.4,531.6 763.4,560.6 745.0,560.6" fill="#d400d4" stroke="#000" stroke-width="0.8" />
<rect x="748.5" y="557.5" width="1.6" height="1.6" fill="#000" stroke="none" stroke-width="0" />
<rect x="756.0" y="557.5" width="1.6" height="1.6" fill="#000" stroke="none" stroke-width="0" />
<rect x="738.0" y="560.6" width="29.0" height="10.7" fill="#9a0000" stroke="#000" stroke-width="1" />
<rect x="737.5" y="571.3" width="31.3" height="4.7" fill="#10d040" stroke="#000" stroke-width="1" />
<rect x="737.5" y="576.5" width="24.5" height="4.5" fill="#10d040" stroke="#000" stroke-width="1" />
<rect x="769.5" y="484.0" width="6.5" height="16.0" fill="#e8e8e8" stroke="#000" stroke-width="1" />
<rect x="770.0" y="487.0" width="5.0" height="4.0" fill="#000" stroke="none" stroke-width="0" />
<rect x="776.0" y="488.0" width="10.0" height="6.0" fill="#00d8e8" stroke="#000" stroke-width="1" />
<rect x="779.0" y="489.0" width="3.0" height="4.0" fill="#000" stroke="none" stroke-width="0" />
<rect x="776.4" y="496.0" width="15.6" height="5.0" fill="#e070e0" stroke="#000" stroke-width="1" />
<rect x="776.4" y="502.6" width="15.3" height="19.8" fill="#dca046" stroke="#000" stroke-width="1" />
<rect x="780.0" y="502.6" width="4.0" height="17.4" fill="#f0f0f0" stroke="#000" stroke-width="0.4" />
<rect x="786.0" y="505.0" width="4.0" height="15.0" fill="#e8e8e8" stroke="#000" stroke-width="0.4" />
<rect x="792.4" y="490.4" width="13.6" height="5.3" fill="#e07070" stroke="#000" stroke-width="1" />
<rect x="792.4" y="531.6" width="8.4" height="5.4" fill="#e07070" stroke="#000" stroke-width="1" />
<rect x="792.4" y="538.5" width="9.6" height="5.3" fill="#e07070" stroke="#000" stroke-width="1" />
<rect x="792.0" y="497.0" width="5.0" height="33.0" fill="#8c8c8c" stroke="#000" stroke-width="1" />
<rect x="797.0" y="498.0" width="4.6" height="32.0" fill="#10d040" stroke="#000" stroke-width="1" />
<rect x="801.6" y="481.0" width="5.4" height="87.0" fill="#5fd35f" stroke="#000" stroke-width="1" />
<rect x="786.0" y="520.0" width="12.0" height="12.0" fill="#222" stroke="#000" stroke-width="1" />
<rect x="790.0" y="522.0" width="6.0" height="6.0" fill="#dca046" stroke="none" stroke-width="0" />
<rect x="796.0" y="545.0" width="6.0" height="17.0" fill="#f0f0f0" stroke="#000" stroke-width="1" />
<polygon points="774.0,516.3 810.0,571.3 810.0,574.4 774.0,574.4" fill="#d8d8d8" stroke="#000" stroke-width="0.8" />
<polygon points="807.0,485.8 813.0,485.8 832.0,559.0 832.0,568.0 807.0,568.0" fill="#9a0000" stroke="#000" stroke-width="0.7" />
<polygon points="813.0,494.0 829.8,494.0 829.8,525.5 823.7,525.5" fill="#dca046" stroke="#000" stroke-width="0.7" />
<rect x="828.0" y="492.0" width="4.0" height="4.0" fill="#000" stroke="none" stroke-width="0" />
<line x1="828.5" y1="492.5" x2="831.5" y2="495.5" stroke="#fff" stroke-width="0.8" />
<line x1="831.5" y1="492.5" x2="828.5" y2="495.5" stroke="#fff" stroke-width="0.8" />
<rect x="828.3" y="501.0" width="3.7" height="26.0" fill="#5fd35f" stroke="#000" stroke-width="1" />
<rect x="823.7" y="531.6" width="38.3" height="3.8" fill="#d8d838" stroke="#000" stroke-width="1" />
<rect x="823.7" y="535.4" width="38.3" height="26.6" fill="#6e6e14" stroke="none" stroke-width="0" />
<rect x="817.0" y="527.0" width="15.0" height="4.6" fill="#5fd35f" stroke="#000" stroke-width="1" />
<rect x="769.5" y="576.6" width="40.5" height="4.6" fill="#d400d4" stroke="#000" stroke-width="1" />
<rect x="765.7" y="582.0" width="47.3" height="5.3" fill="#10d040" stroke="#000" stroke-width="1" />
<rect x="811.5" y="568.0" width="32.1" height="12.5" fill="#10d040" stroke="#000" stroke-width="1" />
<rect x="816.0" y="572.0" width="20.0" height="5.0" fill="#00a030" stroke="none" stroke-width="0" />
<rect x="829.0" y="569.0" width="4.0" height="5.0" fill="#888" stroke="#000" stroke-width="1" />
<rect x="813.0" y="580.0" width="79.0" height="9.0" fill="#6e6e14" stroke="none" stroke-width="0" />
<rect x="845.0" y="569.0" width="17.0" height="13.0" fill="#6e6e14" stroke="none" stroke-width="0" />
<rect x="852.7" y="487.0" width="7.3" height="12.5" fill="#00d8e8" stroke="#000" stroke-width="1" />
<rect x="853.0" y="500.0" width="7.0" height="12.0" fill="#d400d4" stroke="#000" stroke-width="1" />
<rect x="854.0" y="512.0" width="6.0" height="12.0" fill="#dca046" stroke="#000" stroke-width="1" />
<rect x="853.0" y="524.0" width="9.0" height="8.0" fill="#e8e8e8" stroke="#000" stroke-width="1" />
<rect x="853.0" y="470.0" width="9.0" height="17.0" fill="#9a0000" stroke="none" stroke-width="0" />
<ellipse cx="829.0" cy="482.0" rx="4.0" ry="2.2" fill="#e070e0" stroke="#000" stroke-width="0.5" />
<rect x="695.0" y="364.7" width="19.0" height="12.3" fill="url(#cw)" stroke="#000" stroke-width="1" />
<ellipse cx="705.0" cy="366.5" rx="8.0" ry="2.0" fill="#f4f4f4" stroke="#000" stroke-width="0.6" />
<ellipse cx="701.0" cy="371.5" rx="2.0" ry="1.6" fill="#fff" stroke="#000" stroke-width="0.5" />
<rect x="688.7" y="376.7" width="24.7" height="35.3" fill="url(#cw)" stroke="#000" stroke-width="0.8" />
<ellipse cx="701.0" cy="378.0" rx="12.3" ry="1.8" fill="#f0f0f0" stroke="#000" stroke-width="0.6" />
<ellipse cx="694.5" cy="383.5" rx="2.6" ry="2.6" fill="#fff" stroke="#000" stroke-width="0.6" />
<ellipse cx="695.0" cy="408.0" rx="3.0" ry="2.3" fill="#fff" stroke="#000" stroke-width="0.6" />
<path d="M694,395 l2.5,1.2 l-2.5,1.2" fill="none" stroke="#000" stroke-width="0.6" />
<rect x="697.2" y="412.0" width="20.8" height="81.0" fill="url(#cw)" stroke="#000" stroke-width="0.8" />
<rect x="717.4" y="420.0" width="6.6" height="40.0" fill="url(#cl)" stroke="#000" stroke-width="0.5" />
<rect x="831.4" y="428.8" width="21.3" height="130.2" fill="url(#cw)" stroke="#000" stroke-width="0.8" />
<ellipse cx="842.0" cy="429.5" rx="10.6" ry="1.6" fill="#f4f4f4" stroke="#000" stroke-width="0.5" />
<path d="M832.5,559 L851.5,559 L851.5,563 Q842,566 832.5,563 Z" fill="#e8e8e8" stroke="#000" stroke-width="0.7" />
<rect x="833.0" y="563.0" width="10.0" height="5.0" fill="#f0f0f0" stroke="#000" stroke-width="1" />
<rect x="843.0" y="563.0" width="9.0" height="6.0" fill="#8c8c8c" stroke="#000" stroke-width="1" />
<polygon points="537.9,215.7 649.6,213.7 657.0,568.5 545.3,570.0" fill="#d400d4" stroke="#000" stroke-width="1" />
<polygon points="549.6,227.1 637.4,225.6 644.0,555.0 557.2,556.3" fill="#6e6e6e" stroke="#000" stroke-width="1" />
<rect x="642.5" y="296.0" width="1.5" height="1.5" fill="#000" stroke="none" stroke-width="0" />
<rect x="644.5" y="419.0" width="1.5" height="1.5" fill="#000" stroke="none" stroke-width="0" />
<polygon points="870.8,208.8 983.8,207.0 990.5,561.0 879.0,562.0" fill="#d400d4" stroke="#000" stroke-width="1" />
<polygon points="883.8,220.7 970.8,218.3 978.0,548.3 890.5,550.0" fill="#6e6e6e" stroke="#000" stroke-width="1" />
<rect x="880.0" y="355.0" width="1.5" height="1.5" fill="#000" stroke="none" stroke-width="0" />
<rect x="881.5" y="414.0" width="1.5" height="1.5" fill="#000" stroke="none" stroke-width="0" />
<polygon points="545.5,570.0 657.5,568.5 657.8,585.0 545.8,586.0" fill="#000" stroke="#000" stroke-width="1" />
<polygon points="545.5,571.0 657.5,569.5 657.6,574.4 545.6,575.8" fill="#d8d8d8" stroke="none" stroke-width="0" />
<polygon points="545.7,580.2 657.7,579.1 657.8,584.0 545.8,585.0" fill="#d8d8d8" stroke="none" stroke-width="0" />
<line x1="570.9" y1="577.7" x2="575.3" y2="577.7" stroke="#fff" stroke-width="1" />
<line x1="626.9" y1="577.1" x2="631.3" y2="577.0" stroke="#fff" stroke-width="1" />
<polygon points="879.0,562.0 990.8,561.0 991.0,578.5 879.3,579.0" fill="#000" stroke="#000" stroke-width="1" />
<polygon points="879.0,563.0 990.8,562.0 990.9,567.3 879.1,568.1" fill="#d8d8d8" stroke="none" stroke-width="0" />
<polygon points="879.2,572.9 990.9,572.2 991.0,577.5 879.3,578.0" fill="#d8d8d8" stroke="none" stroke-width="0" />
<line x1="904.3" y1="570.3" x2="908.8" y2="570.3" stroke="#fff" stroke-width="1" />
<line x1="960.2" y1="570.0" x2="964.7" y2="569.9" stroke="#fff" stroke-width="1" />
<polygon points="528.7,586.0 640.0,584.5 640.0,592.0 529.0,592.7" fill="#6e6e14" stroke="#000" stroke-width="0.6" />
<polygon points="750.0,583.5 812.0,581.5 1007.0,577.5 1007.0,586.5 750.0,592.0" fill="#6e6e14" stroke="none" stroke-width="0" />
<rect x="984.0" y="584.0" width="23.0" height="3.0" fill="#e88080" stroke="none" stroke-width="0" />
<polygon points="521.5,198.5 1000.0,189.8 984.0,207.0 537.4,215.0" fill="#000" stroke="#000" stroke-width="1" />
<polygon points="522.5,199.5 999.0,190.8 994.2,196.0 527.2,204.4" fill="#d8d8d8" stroke="none" stroke-width="0" />
<polygon points="531.7,209.1 989.8,200.8 985.0,206.0 536.4,214.0" fill="#d8d8d8" stroke="none" stroke-width="0" />
<line x1="552.6" y1="206.3" x2="557.1" y2="206.3" stroke="#fff" stroke-width="1" />
<line x1="604.0" y1="205.4" x2="608.5" y2="205.3" stroke="#fff" stroke-width="1" />
<line x1="655.4" y1="204.5" x2="659.9" y2="204.4" stroke="#fff" stroke-width="1" />
<line x1="706.8" y1="203.5" x2="711.3" y2="203.5" stroke="#fff" stroke-width="1" />
<line x1="758.2" y1="202.6" x2="762.7" y2="202.5" stroke="#fff" stroke-width="1" />
<line x1="809.5" y1="201.7" x2="814.0" y2="201.6" stroke="#fff" stroke-width="1" />
<line x1="860.9" y1="200.8" x2="865.4" y2="200.7" stroke="#fff" stroke-width="1" />
<line x1="912.3" y1="199.8" x2="916.8" y2="199.8" stroke="#fff" stroke-width="1" />
<line x1="963.7" y1="198.9" x2="968.2" y2="198.8" stroke="#fff" stroke-width="1" />
<polygon points="521.0,197.5 528.0,586.0 545.0,586.0 537.6,197.0" fill="#000" stroke="#000" stroke-width="1" />
<polygon points="522.0,197.5 529.0,586.0 534.1,586.0 527.0,197.3" fill="#d8d8d8" stroke="none" stroke-width="0" />
<polygon points="531.6,197.2 538.9,586.0 544.0,586.0 536.6,197.0" fill="#d8d8d8" stroke="none" stroke-width="0" />
<line x1="529.5" y1="208.2" x2="529.6" y2="212.7" stroke="#fff" stroke-width="1" />
<line x1="530.0" y1="232.5" x2="530.0" y2="237.0" stroke="#fff" stroke-width="1" />
<line x1="530.4" y1="256.8" x2="530.5" y2="261.3" stroke="#fff" stroke-width="1" />
<line x1="530.9" y1="281.1" x2="530.9" y2="285.6" stroke="#fff" stroke-width="1" />
<line x1="531.3" y1="305.4" x2="531.4" y2="309.9" stroke="#fff" stroke-width="1" />
<line x1="531.8" y1="329.7" x2="531.8" y2="334.2" stroke="#fff" stroke-width="1" />
<line x1="532.2" y1="354.0" x2="532.3" y2="358.5" stroke="#fff" stroke-width="1" />
<line x1="532.7" y1="378.3" x2="532.7" y2="382.8" stroke="#fff" stroke-width="1" />
<line x1="533.1" y1="402.6" x2="533.2" y2="407.1" stroke="#fff" stroke-width="1" />
<line x1="533.6" y1="426.9" x2="533.6" y2="431.4" stroke="#fff" stroke-width="1" />
<line x1="534.0" y1="451.2" x2="534.1" y2="455.7" stroke="#fff" stroke-width="1" />
<line x1="534.5" y1="475.4" x2="534.5" y2="479.9" stroke="#fff" stroke-width="1" />
<line x1="534.9" y1="499.7" x2="535.0" y2="504.2" stroke="#fff" stroke-width="1" />
<line x1="535.4" y1="524.0" x2="535.4" y2="528.5" stroke="#fff" stroke-width="1" />
<line x1="535.8" y1="548.3" x2="535.9" y2="552.8" stroke="#fff" stroke-width="1" />
<line x1="536.3" y1="572.6" x2="536.3" y2="577.1" stroke="#fff" stroke-width="1" />
<polygon points="649.6,214.0 657.3,586.0 676.4,586.0 666.4,213.5" fill="#000" stroke="#000" stroke-width="1" />
<polygon points="650.6,214.0 658.4,586.0 664.2,586.0 655.6,213.8" fill="#d8d8d8" stroke="none" stroke-width="0" />
<polygon points="660.4,213.7 669.5,586.0 675.3,586.0 665.4,213.5" fill="#d8d8d8" stroke="none" stroke-width="0" />
<line x1="658.2" y1="224.2" x2="658.4" y2="228.7" stroke="#fff" stroke-width="1" />
<line x1="658.8" y1="247.5" x2="658.9" y2="252.0" stroke="#fff" stroke-width="1" />
<line x1="659.4" y1="270.8" x2="659.5" y2="275.2" stroke="#fff" stroke-width="1" />
<line x1="659.9" y1="294.0" x2="660.0" y2="298.5" stroke="#fff" stroke-width="1" />
<line x1="660.5" y1="317.3" x2="660.6" y2="321.8" stroke="#fff" stroke-width="1" />
<line x1="661.0" y1="340.5" x2="661.1" y2="345.0" stroke="#fff" stroke-width="1" />
<line x1="661.6" y1="363.8" x2="661.7" y2="368.3" stroke="#fff" stroke-width="1" />
<line x1="662.1" y1="387.1" x2="662.2" y2="391.6" stroke="#fff" stroke-width="1" />
<line x1="662.7" y1="410.3" x2="662.8" y2="414.8" stroke="#fff" stroke-width="1" />
<line x1="663.2" y1="433.6" x2="663.3" y2="438.1" stroke="#fff" stroke-width="1" />
<line x1="663.8" y1="456.9" x2="663.9" y2="461.4" stroke="#fff" stroke-width="1" />
<line x1="664.3" y1="480.1" x2="664.4" y2="484.6" stroke="#fff" stroke-width="1" />
<line x1="664.9" y1="503.4" x2="665.0" y2="507.9" stroke="#fff" stroke-width="1" />
<line x1="665.4" y1="526.7" x2="665.5" y2="531.2" stroke="#fff" stroke-width="1" />
<line x1="666.0" y1="549.9" x2="666.1" y2="554.4" stroke="#fff" stroke-width="1" />
<line x1="666.5" y1="573.2" x2="666.7" y2="577.7" stroke="#fff" stroke-width="1" />
<polygon points="854.8,210.0 861.8,580.0 879.0,580.0 870.8,209.5" fill="#000" stroke="#000" stroke-width="1" />
<polygon points="855.8,210.0 862.8,580.0 868.0,580.0 860.6,209.8" fill="#d8d8d8" stroke="none" stroke-width="0" />
<polygon points="865.0,209.7 872.8,580.0 878.0,580.0 869.8,209.5" fill="#d8d8d8" stroke="none" stroke-width="0" />
<line x1="863.0" y1="220.2" x2="863.1" y2="224.7" stroke="#fff" stroke-width="1" />
<line x1="863.5" y1="243.3" x2="863.6" y2="247.8" stroke="#fff" stroke-width="1" />
<line x1="864.0" y1="266.4" x2="864.1" y2="270.9" stroke="#fff" stroke-width="1" />
<line x1="864.4" y1="289.6" x2="864.5" y2="294.1" stroke="#fff" stroke-width="1" />
<line x1="864.9" y1="312.7" x2="865.0" y2="317.2" stroke="#fff" stroke-width="1" />
<line x1="865.4" y1="335.9" x2="865.5" y2="340.4" stroke="#fff" stroke-width="1" />
<line x1="865.9" y1="359.0" x2="866.0" y2="363.5" stroke="#fff" stroke-width="1" />
<line x1="866.3" y1="382.1" x2="866.4" y2="386.6" stroke="#fff" stroke-width="1" />
<line x1="866.8" y1="405.3" x2="866.9" y2="409.8" stroke="#fff" stroke-width="1" />
<line x1="867.3" y1="428.4" x2="867.4" y2="432.9" stroke="#fff" stroke-width="1" />
<line x1="867.8" y1="451.6" x2="867.9" y2="456.1" stroke="#fff" stroke-width="1" />
<line x1="868.2" y1="474.7" x2="868.3" y2="479.2" stroke="#fff" stroke-width="1" />
<line x1="868.7" y1="497.9" x2="868.8" y2="502.3" stroke="#fff" stroke-width="1" />
<line x1="869.2" y1="521.0" x2="869.3" y2="525.5" stroke="#fff" stroke-width="1" />
<line x1="869.7" y1="544.1" x2="869.8" y2="548.6" stroke="#fff" stroke-width="1" />
<line x1="870.1" y1="567.3" x2="870.2" y2="571.8" stroke="#fff" stroke-width="1" />
<polygon points="983.0,190.5 991.0,581.0 1007.5,581.0 1000.0,189.5" fill="#000" stroke="#000" stroke-width="1" />
<polygon points="984.0,190.4 992.0,581.0 996.9,581.0 989.1,190.1" fill="#d8d8d8" stroke="none" stroke-width="0" />
<polygon points="993.9,189.9 1001.6,581.0 1006.5,581.0 999.0,189.6" fill="#d8d8d8" stroke="none" stroke-width="0" />
<line x1="991.7" y1="200.3" x2="991.8" y2="204.8" stroke="#fff" stroke-width="1" />
<line x1="992.2" y1="223.3" x2="992.3" y2="227.8" stroke="#fff" stroke-width="1" />
<line x1="992.6" y1="246.4" x2="992.7" y2="250.8" stroke="#fff" stroke-width="1" />
<line x1="993.1" y1="269.4" x2="993.2" y2="273.8" stroke="#fff" stroke-width="1" />
<line x1="993.5" y1="292.4" x2="993.6" y2="296.8" stroke="#fff" stroke-width="1" />
<line x1="994.0" y1="315.4" x2="994.1" y2="319.8" stroke="#fff" stroke-width="1" />
<line x1="994.4" y1="338.4" x2="994.5" y2="342.8" stroke="#fff" stroke-width="1" />
<line x1="994.9" y1="361.4" x2="995.0" y2="365.8" stroke="#fff" stroke-width="1" />
<line x1="995.4" y1="384.4" x2="995.4" y2="388.8" stroke="#fff" stroke-width="1" />
<line x1="995.8" y1="407.3" x2="995.9" y2="411.8" stroke="#fff" stroke-width="1" />
<line x1="996.3" y1="430.3" x2="996.4" y2="434.8" stroke="#fff" stroke-width="1" />
<line x1="996.7" y1="453.3" x2="996.8" y2="457.8" stroke="#fff" stroke-width="1" />
<line x1="997.2" y1="476.3" x2="997.3" y2="480.8" stroke="#fff" stroke-width="1" />
<line x1="997.6" y1="499.3" x2="997.7" y2="503.8" stroke="#fff" stroke-width="1" />
<line x1="998.1" y1="522.3" x2="998.2" y2="526.8" stroke="#fff" stroke-width="1" />
<line x1="998.5" y1="545.4" x2="998.6" y2="549.8" stroke="#fff" stroke-width="1" />
<line x1="999.0" y1="568.4" x2="999.1" y2="572.8" stroke="#fff" stroke-width="1" />
<polygon points="1000.0,189.5 1005.0,190.0 1010.0,581.0 1007.5,581.0" fill="#000" stroke="none" stroke-width="0" />
<rect x="1004.5" y="312.0" width="1.3" height="2.0" fill="#d400d4" stroke="none" stroke-width="0" />
<rect x="1003.5" y="387.0" width="2.5" height="4.0" fill="#e8e8e8" stroke="#000" stroke-width="0.4" />
<line x1="1009.0" y1="402.0" x2="1015.5" y2="394.0" stroke="#e02020" stroke-width="0.9" />
<rect x="1005.5" y="477.0" width="1.2" height="1.5" fill="#d400d4" stroke="none" stroke-width="0" />
<rect x="1010.0" y="487.0" width="1.2" height="6.0" fill="#e08020" stroke="none" stroke-width="0" />
<rect x="498.4" y="398.8" width="25.4" height="6.8" fill="url(#cw)" stroke="#000" stroke-width="0.5" />
<rect x="498.4" y="398.8" width="25.4" height="6.8" fill="#fff" opacity="0.75"/>
<polygon points="491.0,397.0 499.0,396.0 499.5,409.0 493.5,411.5" fill="#000" stroke="none" stroke-width="0" />
<rect x="493.5" y="401.5" width="4.0" height="3.0" fill="#00c8e0" stroke="none" stroke-width="0" />
<rect x="496.5" y="544.0" width="5.5" height="39.0" fill="#a8a8a8" stroke="#555" stroke-width="0.5" />
<rect x="500.7" y="538.0" width="25.2" height="44.7" fill="#d8d8a0" stroke="#555" stroke-width="0.8" />
<line x1="501.0" y1="552.0" x2="526.0" y2="552.0" stroke="#777" stroke-width="0.7" />
<rect x="508.7" y="527.0" width="8.7" height="21.3" fill="#f4f4f4" stroke="#777" stroke-width="0.6" />
<ellipse cx="513.0" cy="526.5" rx="4.4" ry="3.5" fill="#fff" stroke="#888" stroke-width="0.6" />
<rect x="500.0" y="583.8" width="28.6" height="61.2" fill="#d6d6d6" stroke="#555" stroke-width="0.8" />
<rect x="497.5" y="588.0" width="3.0" height="54.0" fill="#b8b8b8" stroke="#444" stroke-width="0.5" />
<rect x="493.5" y="613.0" width="4.5" height="9.0" fill="#3c8c3c" stroke="#000" stroke-width="0.5" />
<rect x="495.5" y="622.0" width="2.5" height="12.0" fill="#e02020" stroke="#000" stroke-width="0.4" />
<rect x="497.0" y="618.0" width="1.8" height="10.0" fill="#f0f0f0" stroke="none" stroke-width="0" />
<polygon points="529.5,592.0 1008.0,585.5 1015.5,927.0 536.0,935.5" fill="#dc7000" stroke="#000" stroke-width="1.2" />
<line x1="531.0" y1="597.0" x2="628.0" y2="596.0" stroke="#000" stroke-width="0.8" />
<line x1="545.0" y1="611.5" x2="628.0" y2="611.0" stroke="#000" stroke-width="0.9" />
<line x1="750.0" y1="596.0" x2="1006.0" y2="590.0" stroke="#000" stroke-width="0.8" />
<polygon points="531.0,593.0 545.0,593.0 553.0,934.0 537.0,935.0" fill="#dc7000" stroke="#000" stroke-width="0.9" />
<line x1="546.5" y1="612.0" x2="553.0" y2="914.0" stroke="#000" stroke-width="0.7" />
<polygon points="550.6,612.0 715.3,610.5 715.3,656.5 551.3,659.0" fill="#d400d4" stroke="#000" stroke-width="0.9" />
<polygon points="550.6,612.0 628.0,611.3 628.0,618.5 551.0,619.6" fill="#b400b4" stroke="none" stroke-width="0" />
<line x1="551.0" y1="620.0" x2="628.0" y2="619.0" stroke="#000" stroke-width="0.8" />
<path d="M579.5,634 L592,634 A10.5,10.5 0 0 1 592,655 L579.5,655 A10.5,10.5 0 0 1 579.5,634 Z" fill="#00d4d4" stroke="#000" stroke-width="0.9" />
<ellipse cx="706.0" cy="644.0" rx="11.5" ry="10.5" fill="#00d4d4" stroke="#000" stroke-width="0.9" />
<rect x="698.0" y="619.5" width="15.6" height="23.5" fill="#000" stroke="none" stroke-width="0" />
<line x1="700.0" y1="625.0" x2="711.0" y2="625.0" stroke="#eee" stroke-width="0.8" />
<line x1="700.0" y1="630.0" x2="711.0" y2="630.0" stroke="#eee" stroke-width="0.8" />
<rect x="710.0" y="637.0" width="1.5" height="1.5" fill="#eee" stroke="none" stroke-width="0" />
<rect x="712.0" y="619.0" width="2.5" height="21.0" fill="#f0f0f0" stroke="none" stroke-width="0" />
<rect x="715.3" y="618.0" width="6.7" height="38.0" fill="#dc7000" stroke="#000" stroke-width="0.6" />
<rect x="722.0" y="618.0" width="5.5" height="38.0" fill="#8a8a14" stroke="#000" stroke-width="0.5" />
<rect x="727.5" y="618.0" width="5.5" height="38.0" fill="url(#cw)" stroke="#000" stroke-width="0.5" />
<rect x="749.5" y="609.0" width="12.5" height="46.5" fill="url(#cw)" stroke="#000" stroke-width="0.6" />
<rect x="762.0" y="609.0" width="8.0" height="46.0" fill="#dc7000" stroke="#000" stroke-width="0.6" />
<line x1="765.5" y1="609.0" x2="765.5" y2="655.0" stroke="#000" stroke-width="0.6" />
<polygon points="549.0,662.0 770.4,658.0 770.4,673.0 549.3,676.0" fill="#00b830" stroke="#000" stroke-width="0.9" />
<polygon points="548.5,677.0 770.5,674.0 770.5,691.0 549.0,693.6" fill="#dc7000" stroke="#000" stroke-width="0.9" />
<line x1="549.0" y1="680.5" x2="770.0" y2="677.5" stroke="#000" stroke-width="0.7" />
<polygon points="549.8,693.6 762.0,691.0 766.5,895.5 553.5,898.0" fill="#d8d800" stroke="#000" stroke-width="0.9" />
<polygon points="762.0,691.0 770.5,691.0 775.0,913.0 766.5,895.5" fill="#dc7000" stroke="#000" stroke-width="0.7" />
<line x1="551.0" y1="694.0" x2="555.5" y2="897.0" stroke="#8a8a00" stroke-width="1" />
<ellipse cx="574.6" cy="723.0" rx="10.4" ry="10.4" fill="#d400d4" stroke="#000" stroke-width="0.9" />
<ellipse cx="576.0" cy="789.0" rx="10.4" ry="10.4" fill="#d400d4" stroke="#000" stroke-width="0.9" />
<ellipse cx="577.4" cy="854.7" rx="10.4" ry="10.4" fill="#d400d4" stroke="#000" stroke-width="0.9" />
<path d="M568.6,861 L586.2,861 A10.4,10.4 0 0 1 568.6,861 Z" fill="#d8a030" stroke="#000" stroke-width="0.7" />
<polygon points="553.5,898.0 775.0,895.5 775.3,913.0 554.0,915.0" fill="#c06000" stroke="#000" stroke-width="0.8" />
<polygon points="554.0,915.0 1000.0,908.0 1000.5,925.0 554.3,932.5" fill="#dc7000" stroke="#000" stroke-width="0.8" />
<line x1="554.0" y1="918.5" x2="1000.0" y2="911.5" stroke="#000" stroke-width="0.6" />
<polygon points="769.8,605.5 990.5,604.5 997.5,907.5 776.3,913.0" fill="#00d4d4" stroke="#000" stroke-width="1" />
<rect x="779.4" y="744.0" width="6.9" height="33.4" fill="#d8c020" stroke="#000" stroke-width="0.8" />
<line x1="782.5" y1="745.0" x2="782.5" y2="777.0" stroke="#000" stroke-width="0.7" />
<polygon points="991.0,586.0 1007.5,585.5 1015.5,927.0 999.0,927.5" fill="#dc7000" stroke="#000" stroke-width="0.9" />
<line x1="1008.5" y1="600.0" x2="1015.0" y2="900.0" stroke="#000" stroke-width="2" />
<polygon points="536.2,934.5 1015.4,926.5 1015.4,931.0 536.5,940.2" fill="#dc7000" stroke="#000" stroke-width="0.7" />
<line x1="537.0" y1="937.0" x2="1015.0" y2="928.5" stroke="#000" stroke-width="0.5" />
<rect x="536.5" y="935.5" width="3.0" height="2.5" fill="#f4f4f4" stroke="none" stroke-width="0" />
<rect x="1012.0" y="926.8" width="3.2" height="2.2" fill="#f4f4f4" stroke="none" stroke-width="0" />
<line x1="970.0" y1="928.3" x2="1012.0" y2="927.6" stroke="#f0d0a0" stroke-width="1" stroke-dasharray="2 1.5"/>
<line x1="582.5" y1="936.0" x2="608.5" y2="935.6" stroke="#f4f4f4" stroke-width="2" />
<polygon points="585.0,937.5 608.5,937.0 608.5,940.0 603.5,940.5 614.3,952.5 610.3,959.5 603.3,957.5" fill="#727272" stroke="#000" stroke-width="0.8" />
<ellipse cx="611.3" cy="954.5" rx="12.5" ry="13.0" fill="#606060" stroke="#000" stroke-width="0.9" />
<ellipse cx="608.3" cy="954.5" rx="12.0" ry="13.4" fill="#787878" stroke="#000" stroke-width="1" />
<ellipse cx="607.3" cy="955.0" rx="9.6" ry="11.0" fill="#848484" stroke="#000" stroke-width="0.7" />
<path d="M603.5,940.5 L612.3,953.5 Q613.3,959.5 607.3,959.5 Q603.3,958.5 602.3,954.5 Z" fill="#727272" stroke="#000" stroke-width="0.8" />
<ellipse cx="608.3" cy="955.5" rx="2.6" ry="2.6" fill="#4a4a4a" stroke="#000" stroke-width="0.7" />
<line x1="943.0" y1="928.0" x2="969.0" y2="927.6" stroke="#f4f4f4" stroke-width="2" />
<polygon points="945.5,929.5 969.0,929.0 969.0,932.0 964.0,932.5 971.2,945.5 967.2,952.5 960.2,950.5" fill="#727272" stroke="#000" stroke-width="0.8" />
<ellipse cx="968.2" cy="947.5" rx="12.5" ry="13.0" fill="#606060" stroke="#000" stroke-width="0.9" />
<ellipse cx="965.2" cy="947.5" rx="12.0" ry="13.4" fill="#787878" stroke="#000" stroke-width="1" />
<ellipse cx="964.2" cy="948.0" rx="9.6" ry="11.0" fill="#848484" stroke="#000" stroke-width="0.7" />
<path d="M964.0,932.5 L969.2,946.5 Q970.2,952.5 964.2,952.5 Q960.2,951.5 959.2,947.5 Z" fill="#727272" stroke="#000" stroke-width="0.8" />
<ellipse cx="965.2" cy="948.5" rx="2.6" ry="2.6" fill="#4a4a4a" stroke="#000" stroke-width="0.7" />
<rect x="550.4" y="940.5" width="5.6" height="20.0" fill="url(#footd)" stroke="#000" stroke-width="0.4" />
<rect x="540.8" y="958.2" width="24.8" height="12.5" rx="6.9" ry="6.2" fill="url(#footd)" stroke="#000" stroke-width="0.5"/>
<line x1="542.3" y1="961.8" x2="564.1" y2="961.8" stroke="#333" stroke-width="0.5" />
<line x1="542.3" y1="965.1" x2="564.1" y2="965.1" stroke="#333" stroke-width="0.5" />
<line x1="542.3" y1="968.2" x2="564.1" y2="968.2" stroke="#333" stroke-width="0.5" />
<rect x="996.0" y="931.5" width="5.6" height="19.5" fill="url(#footd)" stroke="#000" stroke-width="0.4" />
<rect x="986.4" y="948.8" width="24.8" height="12.5" rx="6.9" ry="6.2" fill="url(#footd)" stroke="#000" stroke-width="0.5"/>
<line x1="987.9" y1="952.2" x2="1009.7" y2="952.2" stroke="#333" stroke-width="0.5" />
<line x1="987.9" y1="955.6" x2="1009.7" y2="955.6" stroke="#333" stroke-width="0.5" />
<line x1="987.9" y1="958.8" x2="1009.7" y2="958.8" stroke="#333" stroke-width="0.5" />
<polygon points="648.0,926.0 742.0,924.0 742.0,938.5 648.0,940.5" fill="#d29a46" stroke="#000" stroke-width="0.8" />
<line x1="648.0" y1="930.0" x2="742.0" y2="928.0" stroke="#000" stroke-width="0.5" />
<polygon points="650.0,941.5 742.0,939.5 742.0,955.5 650.0,957.5" fill="#d29a46" stroke="#000" stroke-width="0.8" />
<line x1="650.0" y1="945.0" x2="742.0" y2="943.0" stroke="#000" stroke-width="0.5" />
<rect x="631.9" y="959.2" width="25.2" height="10.5" rx="5.8" ry="5.2" fill="url(#foot)" stroke="#000" stroke-width="0.5"/>
<line x1="633.4" y1="962.2" x2="655.6" y2="962.2" stroke="#444" stroke-width="0.5" />
<line x1="633.4" y1="965.0" x2="655.6" y2="965.0" stroke="#444" stroke-width="0.5" />
<line x1="633.4" y1="967.6" x2="655.6" y2="967.6" stroke="#444" stroke-width="0.5" />
<rect x="631.9" y="972.8" width="25.2" height="12.5" rx="6.9" ry="6.2" fill="url(#foot)" stroke="#000" stroke-width="0.5"/>
<line x1="633.4" y1="976.2" x2="655.6" y2="976.2" stroke="#444" stroke-width="0.5" />
<line x1="633.4" y1="979.6" x2="655.6" y2="979.6" stroke="#444" stroke-width="0.5" />
<line x1="633.4" y1="982.8" x2="655.6" y2="982.8" stroke="#444" stroke-width="0.5" />
<rect x="641.7" y="959.5" width="5.6" height="15.0" fill="url(#foot)" stroke="#000" stroke-width="0.4" />
<rect x="735.9" y="956.8" width="25.2" height="10.5" rx="5.8" ry="5.2" fill="url(#foot)" stroke="#000" stroke-width="0.5"/>
<line x1="737.4" y1="959.7" x2="759.6" y2="959.7" stroke="#444" stroke-width="0.5" />
<line x1="737.4" y1="962.5" x2="759.6" y2="962.5" stroke="#444" stroke-width="0.5" />
<line x1="737.4" y1="965.1" x2="759.6" y2="965.1" stroke="#444" stroke-width="0.5" />
<rect x="735.9" y="970.2" width="25.2" height="12.5" rx="6.9" ry="6.2" fill="url(#foot)" stroke="#000" stroke-width="0.5"/>
<line x1="737.4" y1="973.8" x2="759.6" y2="973.8" stroke="#444" stroke-width="0.5" />
<line x1="737.4" y1="977.1" x2="759.6" y2="977.1" stroke="#444" stroke-width="0.5" />
<line x1="737.4" y1="980.2" x2="759.6" y2="980.2" stroke="#444" stroke-width="0.5" />
<rect x="745.7" y="957.0" width="5.6" height="15.0" fill="url(#foot)" stroke="#000" stroke-width="0.4" />
<polygon points="628.5,586.5 640.0,584.6 749.3,584.6 750.0,602.0 628.5,603.5" fill="#c08a38" stroke="#000" stroke-width="0.9" />
<rect x="648.5" y="586.0" width="11.0" height="10.5" fill="url(#cl)" stroke="#000" stroke-width="0.6" />
<ellipse cx="654.0" cy="596.5" rx="5.5" ry="1.6" fill="#b0b0c4" stroke="#000" stroke-width="0.5" />
<rect x="696.5" y="586.0" width="11.0" height="10.5" fill="url(#cl)" stroke="#000" stroke-width="0.6" />
<ellipse cx="702.0" cy="596.5" rx="5.5" ry="1.6" fill="#b0b0c4" stroke="#000" stroke-width="0.5" />
<rect x="647.0" y="595.0" width="9.0" height="1.3" fill="#000" stroke="none" stroke-width="0" />
<path d="M639,571 L639,580 Q688,596 736.7,580 L736.7,571 Z" fill="url(#cl2)" stroke="#000" stroke-width="0.8" />
<ellipse cx="688.0" cy="571.0" rx="48.8" ry="8.0" fill="#c0c0d4" stroke="#000" stroke-width="0.7" />
<path d="M646.6,533 L646.6,569 Q688,580 730.6,569 L730.6,533 Z" fill="url(#cl2)" stroke="#000" stroke-width="0.8" />
<rect x="646.6" y="533.0" width="10.9" height="38.5" fill="#c4c4d8" stroke="#000" stroke-width="0.7" />
<rect x="657.5" y="543.0" width="60.5" height="32.0" fill="#b8b8cc" stroke="#000" stroke-width="0.7" />
<polygon points="718.0,543.0 730.6,540.0 730.6,569.0 718.0,575.0" fill="#7a7a8a" stroke="#000" stroke-width="0.6" />
<line x1="657.5" y1="536.0" x2="730.0" y2="534.0" stroke="#000" stroke-width="0.7" />
<polygon points="680.0,536.0 686.0,535.0 702.0,572.0 696.0,574.0" fill="#111" stroke="none" stroke-width="0" />
<line x1="688.0" y1="536.0" x2="704.0" y2="570.0" stroke="#d0d0d0" stroke-width="0.8" />
<ellipse cx="652.0" cy="565.5" rx="2.2" ry="2.2" fill="#444" stroke="#000" stroke-width="0.6" />
<path d="M623.5,487 L623.5,527.7 Q680,541 749,524.5 L749,487 Z" fill="url(#bowl)" stroke="#000" stroke-width="0.9" />
<ellipse cx="686.2" cy="486.7" rx="62.8" ry="8.0" fill="url(#bowlin)" stroke="#000" stroke-width="0.9" />
<path d="M626,489 Q686,500 747,488 Q686,496 626,489 Z" fill="#e0e0e0" stroke="#000" stroke-width="0.6" />
<polygon points="653.5,482.3 720.4,481.5 720.4,487.3 653.5,488.3" fill="#e4e4e4" stroke="#000" stroke-width="0.7" />
<polygon points="655.5,477.4 686.3,477.0 686.3,480.4 655.5,481.0" fill="#d8d8d8" stroke="#000" stroke-width="0.5" />
<rect x="720.4" y="482.0" width="5.1" height="5.3" fill="#f0f0f0" stroke="#000" stroke-width="0.6" />
<rect x="697.2" y="412.0" width="20.8" height="69.5" fill="url(#cw)" stroke="#000" stroke-width="0.8" />
<polygon points="628.5,603.0 645.5,603.0 656.3,961.5 635.5,963.0" fill="#d29a46" stroke="#000" stroke-width="0.9" />
<line x1="641.5" y1="604.0" x2="650.4" y2="962.0" stroke="#000" stroke-width="0.6" />
<polygon points="733.0,602.5 750.0,602.0 757.2,958.0 739.6,959.5" fill="#d29a46" stroke="#000" stroke-width="0.9" />
<line x1="746.5" y1="603.0" x2="754.0" y2="958.5" stroke="#000" stroke-width="0.6" />
<polygon points="645.5,604.5 733.0,603.5 733.0,616.5 645.7,618.7" fill="#d29a46" stroke="#000" stroke-width="0.8" />
<line x1="645.5" y1="607.0" x2="733.0" y2="606.0" stroke="#000" stroke-width="0.5" />
<polygon points="1071.0,818.6 1285.7,814.0 1285.7,832.0 1071.0,837.5" fill="#d29a46" stroke="#000" stroke-width="0.8" />
<line x1="1071.0" y1="822.0" x2="1285.0" y2="817.5" stroke="#000" stroke-width="0.5" />
<polygon points="1071.0,853.0 1285.7,849.0 1285.7,866.0 1071.0,869.8" fill="#d29a46" stroke="#000" stroke-width="0.8" />
<line x1="1071.0" y1="856.5" x2="1285.0" y2="852.5" stroke="#000" stroke-width="0.5" />
<polygon points="1050.4,575.0 1066.0,575.0 1071.0,873.6 1052.5,873.6" fill="#d29a46" stroke="#000" stroke-width="0.9" />
<line x1="1061.0" y1="580.0" x2="1065.0" y2="873.0" stroke="#000" stroke-width="0.5" />
<rect x="1300.5" y="852.2" width="10.0" height="11.0" rx="6.1" ry="5.5" fill="url(#footd)" stroke="#000" stroke-width="0.5"/>
<line x1="1302.0" y1="855.3" x2="1309.0" y2="855.3" stroke="#222" stroke-width="0.5" />
<line x1="1302.0" y1="858.2" x2="1309.0" y2="858.2" stroke="#222" stroke-width="0.5" />
<line x1="1302.0" y1="861.0" x2="1309.0" y2="861.0" stroke="#222" stroke-width="0.5" />
<polygon points="1282.0,608.0 1301.0,608.0 1305.0,868.4 1284.0,868.4" fill="#d29a46" stroke="#000" stroke-width="0.9" />
<line x1="1296.0" y1="610.0" x2="1300.0" y2="868.0" stroke="#000" stroke-width="0.5" />
<line x1="1303.0" y1="615.0" x2="1307.0" y2="860.0" stroke="#000" stroke-width="1.5" />
<rect x="1053.0" y="873.6" width="21.0" height="3.4" fill="#d29a46" stroke="#000" stroke-width="0.6" />
<rect x="1282.0" y="868.4" width="22.0" height="3.1" fill="#d29a46" stroke="#000" stroke-width="0.6" />
<rect x="1292.2" y="871.5" width="5.6" height="12.5" fill="url(#footd)" stroke="#000" stroke-width="0.3" />
<rect x="1282.6" y="883.5" width="24.8" height="13.0" rx="7.2" ry="6.5" fill="url(#footd)" stroke="#000" stroke-width="0.5"/>
<line x1="1284.1" y1="887.1" x2="1305.9" y2="887.1" stroke="#222" stroke-width="0.5" />
<line x1="1284.1" y1="890.6" x2="1305.9" y2="890.6" stroke="#222" stroke-width="0.5" />
<line x1="1284.1" y1="893.9" x2="1305.9" y2="893.9" stroke="#222" stroke-width="0.5" />
<rect x="1059.2" y="877.0" width="4.4" height="7.0" fill="url(#footd)" stroke="#000" stroke-width="0.3" />
<polygon points="1047.0,568.5 1299.5,568.5 1301.0,608.0 1048.7,610.0" fill="#c08a38" stroke="#000" stroke-width="0.9" />
<polygon points="1048.7,609.5 1301.0,607.0 1301.0,623.0 1066.0,626.0" fill="#d29a46" stroke="#000" stroke-width="0.8" />
<line x1="1066.0" y1="613.5" x2="1284.0" y2="611.0" stroke="#000" stroke-width="0.5" />
<ellipse cx="1271.5" cy="600.5" rx="4.0" ry="1.2" fill="#a87428" stroke="#000" stroke-width="0.5" />
<linearGradient id="tray" x1="0" x2="1"><stop offset="0" stop-color="#b8b8cc"/><stop offset="0.5" stop-color="#a4a4b8"/><stop offset="1" stop-color="#686876"/></linearGradient>
<linearGradient id="bin" x1="0" x2="1"><stop offset="0" stop-color="#64647a"/><stop offset="0.35" stop-color="#9c9cb2"/><stop offset="0.75" stop-color="#c8c8dc"/><stop offset="1" stop-color="#b8b8cc"/></linearGradient>
<linearGradient id="base" x1="0" x2="1"><stop offset="0" stop-color="#b0b0c4"/><stop offset="0.5" stop-color="#bcbcd0"/><stop offset="0.79" stop-color="#b0b0c4"/><stop offset="0.8" stop-color="#84849a"/><stop offset="1" stop-color="#6c6c7a"/></linearGradient>
<rect x="1111.5" y="572.0" width="20.0" height="26.5" fill="url(#cl)" stroke="#000" stroke-width="0.6" />
<ellipse cx="1121.5" cy="598.5" rx="10.0" ry="2.6" fill="#b0b0c4" stroke="#000" stroke-width="0.5" />
<rect x="1241.5" y="566.0" width="20.0" height="23.0" fill="url(#cl)" stroke="#000" stroke-width="0.6" />
<ellipse cx="1251.5" cy="589.0" rx="10.0" ry="2.6" fill="#b0b0c4" stroke="#000" stroke-width="0.5" />
<path d="M1084.7,548 L1084.7,571 Q1150,583 1187.7,580 Q1240,577 1271,562.2 L1271,543.6 Q1230,561 1170,562.5 Q1120,562 1084.7,548 Z" fill="url(#cl2)" stroke="#000" stroke-width="0.9" />
<path d="M1100,548 Q1190,562 1255.400,541 L1255.400,537.5 Q1266,539.500 1271,543.600 Q1230,561 1170,562.500 Q1120,562 1100,553 Z" fill="#c6c6da" stroke="#000" stroke-width="0.7" />
<path d="M1128.3,458 L1128.3,552 Q1190,560 1229,551 L1255.4,544 L1255.4,452 Z" fill="url(#base)" stroke="#000" stroke-width="0.9" />
<line x1="1229.0" y1="462.0" x2="1229.0" y2="551.0" stroke="#000" stroke-width="0.7" />
<path d="M1128.3,491.7 L1229,484.8 L1255.4,478" fill="none" stroke="#000" stroke-width="0.7" />
<path d="M1128.3,467 L1229,463 L1255.4,456" fill="none" stroke="#000" stroke-width="0.6" />
<polygon points="1155.7,470.0 1168.3,469.5 1201.6,543.2 1189.0,553.5" fill="#8c8c9e" stroke="#000" stroke-width="0.8" />
<line x1="1157.5" y1="471.0" x2="1191.0" y2="551.0" stroke="#000" stroke-width="0.7" />
<line x1="1159.6" y1="471.0" x2="1193.1" y2="551.0" stroke="#000" stroke-width="0.7" />
<line x1="1161.7" y1="471.0" x2="1195.2" y2="551.0" stroke="#000" stroke-width="0.7" />
<line x1="1163.8" y1="471.0" x2="1197.3" y2="551.0" stroke="#000" stroke-width="0.7" />
<line x1="1165.9" y1="471.0" x2="1199.4" y2="551.0" stroke="#000" stroke-width="0.7" />
<line x1="1157.0" y1="474.0" x2="1167.0" y2="472.0" stroke="#000" stroke-width="0.4" />
<line x1="1159.5" y1="479.6" x2="1169.5" y2="477.6" stroke="#000" stroke-width="0.4" />
<line x1="1162.0" y1="485.2" x2="1172.0" y2="483.2" stroke="#000" stroke-width="0.4" />
<line x1="1164.5" y1="490.8" x2="1174.5" y2="488.8" stroke="#000" stroke-width="0.4" />
<line x1="1167.0" y1="496.4" x2="1177.0" y2="494.4" stroke="#000" stroke-width="0.4" />
<line x1="1169.5" y1="502.0" x2="1179.5" y2="500.0" stroke="#000" stroke-width="0.4" />
<line x1="1172.0" y1="507.6" x2="1182.0" y2="505.6" stroke="#000" stroke-width="0.4" />
<line x1="1174.5" y1="513.2" x2="1184.5" y2="511.2" stroke="#000" stroke-width="0.4" />
<line x1="1177.0" y1="518.8" x2="1187.0" y2="516.8" stroke="#000" stroke-width="0.4" />
<line x1="1179.5" y1="524.4" x2="1189.5" y2="522.4" stroke="#000" stroke-width="0.4" />
<line x1="1182.0" y1="530.0" x2="1192.0" y2="528.0" stroke="#000" stroke-width="0.4" />
<line x1="1184.5" y1="535.6" x2="1194.5" y2="533.6" stroke="#000" stroke-width="0.4" />
<line x1="1187.0" y1="541.2" x2="1197.0" y2="539.2" stroke="#000" stroke-width="0.4" />
<line x1="1189.5" y1="546.8" x2="1199.5" y2="544.8" stroke="#000" stroke-width="0.4" />
<ellipse cx="1173.0" cy="473.5" rx="3.2" ry="3.6" fill="#e4e4f0" stroke="#000" stroke-width="0.6" />
<ellipse cx="1198.5" cy="538.0" rx="3.2" ry="3.6" fill="#e4e4f0" stroke="#000" stroke-width="0.6" />
<path d="M1087,414 L1087,442 Q1128,449 1169.5,445 L1169.5,414 Z" fill="#c0c0d4" stroke="#000" stroke-width="0.8" />
<path d="M1169.5,415 Q1240,414 1272,404 Q1286,399 1290.9,392 L1290.9,433.3 Q1280,443 1229,450.5 Q1200,454 1169.5,455 Z" fill="url(#tray)" stroke="#000" stroke-width="0.9" />
<path d="M1169.5,455 L1169.5,459 Q1215,457.500 1253,451.6 L1253,448" fill="#8c8c9e" stroke="#000" stroke-width="0.7" />
<path d="M1253,388.6 Q1286,390 1290.9,394 Q1288,402 1262,408 Q1230,415 1169.5,415 L1169.5,408 Q1245,405 1253,395 Z" fill="#c4c4d8" stroke="#000" stroke-width="0.8" />
<polygon points="1050.4,400.8 1085.9,392.0 1087.0,441.0 1066.0,438.0 1050.4,431.0" fill="#bcbcd0" stroke="#000" stroke-width="0.8" />
<path d="M1050.4,400.800 L1058,404 L1087,398" fill="none" stroke="#000" stroke-width="0.6" />
<path d="M1085.9,391.4 L1085.9,411 Q1170,424 1252.4,404 L1252.4,391.4 Z" fill="#c4c4d8" stroke="#000" stroke-width="0.8" />
<ellipse cx="1169.2" cy="391.4" rx="83.3" ry="13.2" fill="#c8c8dc" stroke="#000" stroke-width="0.9" />
<ellipse cx="1169.2" cy="391.8" rx="80.5" ry="11.6" fill="url(#bin)" stroke="#000" stroke-width="0.7" />
<path d="M1090,394 Q1170,414 1248,395 Q1170,408 1090,394 Z" fill="#c4c4d8" stroke="#000" stroke-width="0.5" />
<rect x="1088.5" y="409.0" width="9.5" height="9.0" fill="#c8c8dc" stroke="#000" stroke-width="0.5" />
<polygon points="1010.3,420.7 1108.0,418.8 1168.3,418.4 1168.3,427.0 1108.8,428.7 1010.3,431.5" fill="#c0c0d4" stroke="#000" stroke-width="0.8" />
<line x1="1022.0" y1="421.5" x2="1108.0" y2="419.8" stroke="#000" stroke-width="0.4" />
<rect x="1010.3" y="420.7" width="11.7" height="10.8" fill="#7c7c88" stroke="#000" stroke-width="0.6" />
<rect x="1012.0" y="423.0" width="8.0" height="6.5" fill="#9c9ca8" stroke="#444" stroke-width="0.4" />
<rect x="1108.0" y="425.0" width="1.0" height="1.0" fill="#000" stroke="none" stroke-width="0" />
<rect x="1007.0" y="439.0" width="12.4" height="7.4" fill="#e07070" stroke="#000" stroke-width="0.6" />
<rect x="1010.0" y="441.5" width="1.5" height="1.5" fill="#000" stroke="none" stroke-width="0" />
<rect x="1007.0" y="446.4" width="12.4" height="10.3" fill="#e0e0e0" stroke="#000" stroke-width="0.6" />
<polygon points="1019.4,448.0 1050.0,446.0 1050.0,452.0 1019.4,455.0" fill="#b8b8cc" stroke="#000" stroke-width="0.6" />
<polygon points="1052.0,884.5 1138.0,882.5 1138.0,898.0 1052.0,900.0" fill="#d29a46" stroke="#000" stroke-width="0.8" />
<line x1="1052.0" y1="888.0" x2="1138.0" y2="886.0" stroke="#000" stroke-width="0.5" />
<polygon points="1052.0,900.5 1138.0,898.5 1138.0,915.5 1052.0,917.5" fill="#d29a46" stroke="#000" stroke-width="0.8" />
<line x1="1052.0" y1="904.0" x2="1138.0" y2="902.0" stroke="#000" stroke-width="0.5" />
<rect x="1032.0" y="923.8" width="26.0" height="10.5" rx="5.8" ry="5.2" fill="url(#foot)" stroke="#000" stroke-width="0.5"/>
<line x1="1033.5" y1="926.7" x2="1056.5" y2="926.7" stroke="#444" stroke-width="0.5" />
<line x1="1033.5" y1="929.5" x2="1056.5" y2="929.5" stroke="#444" stroke-width="0.5" />
<line x1="1033.5" y1="932.1" x2="1056.5" y2="932.1" stroke="#444" stroke-width="0.5" />
<rect x="1032.0" y="937.2" width="26.0" height="12.5" rx="6.9" ry="6.2" fill="url(#foot)" stroke="#000" stroke-width="0.5"/>
<line x1="1033.5" y1="940.8" x2="1056.5" y2="940.8" stroke="#444" stroke-width="0.5" />
<line x1="1033.5" y1="944.1" x2="1056.5" y2="944.1" stroke="#444" stroke-width="0.5" />
<line x1="1033.5" y1="947.2" x2="1056.5" y2="947.2" stroke="#444" stroke-width="0.5" />
<rect x="1042.2" y="924.0" width="5.6" height="15.0" fill="url(#foot)" stroke="#000" stroke-width="0.4" />
<rect x="1134.8" y="922.2" width="26.0" height="10.5" rx="5.8" ry="5.2" fill="url(#foot)" stroke="#000" stroke-width="0.5"/>
<line x1="1136.3" y1="925.2" x2="1159.3" y2="925.2" stroke="#444" stroke-width="0.5" />
<line x1="1136.3" y1="928.0" x2="1159.3" y2="928.0" stroke="#444" stroke-width="0.5" />
<line x1="1136.3" y1="930.6" x2="1159.3" y2="930.6" stroke="#444" stroke-width="0.5" />
<rect x="1134.8" y="935.8" width="26.0" height="12.5" rx="6.9" ry="6.2" fill="url(#foot)" stroke="#000" stroke-width="0.5"/>
<line x1="1136.3" y1="939.2" x2="1159.3" y2="939.2" stroke="#444" stroke-width="0.5" />
<line x1="1136.3" y1="942.6" x2="1159.3" y2="942.6" stroke="#444" stroke-width="0.5" />
<line x1="1136.3" y1="945.8" x2="1159.3" y2="945.8" stroke="#444" stroke-width="0.5" />
<rect x="1145.0" y="922.5" width="5.6" height="15.0" fill="url(#foot)" stroke="#000" stroke-width="0.4" />
<polygon points="1027.4,538.5 1038.0,537.5 1148.3,536.5 1148.3,554.5 1027.4,556.5" fill="#c08a38" stroke="#000" stroke-width="0.9" />
<ellipse cx="1052.0" cy="551.5" rx="4.0" ry="1.0" fill="#a87428" stroke="#000" stroke-width="0.5" />
<polygon points="1045.0,556.4 1131.0,555.0 1131.0,570.5 1045.0,572.3" fill="#d29a46" stroke="#000" stroke-width="0.8" />
<polygon points="1028.0,556.5 1045.3,556.3 1054.0,920.0 1034.0,920.0" fill="#d29a46" stroke="#000" stroke-width="0.9" />
<line x1="1040.5" y1="557.0" x2="1048.5" y2="919.0" stroke="#000" stroke-width="0.5" />
<polygon points="1131.0,555.0 1150.0,554.5 1155.0,918.0 1136.0,918.5" fill="#d29a46" stroke="#000" stroke-width="0.9" />
<line x1="1144.5" y1="556.0" x2="1149.0" y2="917.0" stroke="#000" stroke-width="0.5" />
<line x1="1133.0" y1="556.0" x2="1138.0" y2="917.0" stroke="#000" stroke-width="0.5" />
<rect x="1032.5" y="920.0" width="23.0" height="3.5" fill="#d29a46" stroke="#000" stroke-width="0.6" />
<rect x="1134.5" y="918.0" width="22.5" height="3.0" fill="#d29a46" stroke="#000" stroke-width="0.6" />
<rect x="1051.8" y="537.0" width="10.0" height="6.0" fill="url(#cl)" stroke="#000" stroke-width="0.5" />
<ellipse cx="1056.8" cy="543.0" rx="5.0" ry="1.4" fill="#b0b0c4" stroke="#000" stroke-width="0.4" />
<rect x="1075.3" y="537.0" width="10.0" height="14.5" fill="url(#cl)" stroke="#000" stroke-width="0.5" />
<ellipse cx="1080.3" cy="551.5" rx="5.0" ry="1.4" fill="#b0b0c4" stroke="#000" stroke-width="0.4" />
<rect x="1119.7" y="537.0" width="10.0" height="5.5" fill="url(#cl)" stroke="#000" stroke-width="0.5" />
<ellipse cx="1124.7" cy="542.5" rx="5.0" ry="1.4" fill="#b0b0c4" stroke="#000" stroke-width="0.4" />
<path d="M1037.7,522 L1037.7,530 Q1087,548 1136.3,530 L1136.3,522 Z" fill="url(#cl2)" stroke="#000" stroke-width="0.8" />
<ellipse cx="1087.0" cy="522.0" rx="49.3" ry="8.6" fill="#c0c0d4" stroke="#000" stroke-width="0.7" />
<path d="M1045,478 L1045,522 Q1087,531 1129.4,520 L1129.4,476 Z" fill="url(#cl2)" stroke="#000" stroke-width="0.8" />
<rect x="1045.0" y="483.0" width="11.0" height="42.0" fill="#c4c4d8" stroke="#000" stroke-width="0.7" />
<rect x="1056.0" y="492.0" width="61.0" height="36.0" fill="#b8b8cc" stroke="#000" stroke-width="0.7" />
<polygon points="1117.0,492.0 1129.4,489.0 1129.4,521.0 1117.0,528.0" fill="#7a7a8a" stroke="#000" stroke-width="0.6" />
<line x1="1045.0" y1="483.0" x2="1129.0" y2="480.0" stroke="#000" stroke-width="0.6" />
<polygon points="1078.0,485.0 1084.0,484.0 1101.0,525.0 1095.0,527.0" fill="#111" stroke="none" stroke-width="0" />
<line x1="1086.0" y1="485.0" x2="1103.0" y2="523.0" stroke="#d0d0d0" stroke-width="0.7" />
<ellipse cx="1051.0" cy="486.0" rx="2.3" ry="2.3" fill="#444" stroke="#000" stroke-width="0.5" />
<ellipse cx="1051.0" cy="519.0" rx="2.3" ry="2.3" fill="#444" stroke="#000" stroke-width="0.5" />
<path d="M1027.5,456 L1027.5,474.5 Q1087,490 1148.9,470 L1148.9,451.6 Z" fill="url(#cl2)" stroke="#000" stroke-width="0.8" />
<ellipse cx="1088.2" cy="454.5" rx="60.7" ry="12.5" fill="#c4c4d8" stroke="#000" stroke-width="0.8" />
<path d="M1031,459 Q1087,476 1146,456" fill="none" stroke="#000" stroke-width="0.5" />
<path d="M1043.5,448 L1043.5,456 Q1085,466 1127.1,455 L1127.1,448 Z" fill="#b8b8cc" stroke="#000" stroke-width="0.7" />
<ellipse cx="1085.3" cy="448.2" rx="41.8" ry="8.0" fill="#c8c8dc" stroke="#000" stroke-width="0.8" />
<ellipse cx="1085.3" cy="448.6" rx="39.5" ry="6.8" fill="url(#bin)" stroke="#000" stroke-width="0.6" />
<path d="M1048,450 Q1085,461 1123,450 Q1085,457 1048,450 Z" fill="#c0c0d4" stroke="#000" stroke-width="0.4" />
<line x1="450.0" y1="552.0" x2="450.0" y2="568.0" stroke="#c8c8c8" stroke-width="0.8" />
<line x1="452.0" y1="572.0" x2="520.0" y2="570.0" stroke="#20c8d0" stroke-width="1.6" />
<polygon points="515.0,566.0 525.5,570.0 515.0,573.5" fill="#30d0d8" stroke="none" stroke-width="0" />
<line x1="450.0" y1="578.0" x2="450.0" y2="612.0" stroke="#18a018" stroke-width="2" />
<line x1="450.5" y1="578.0" x2="450.5" y2="595.0" stroke="#d8e020" stroke-width="0.8" />
<polygon points="446.5,610.0 453.5,610.0 450.0,621.0" fill="#18a018" stroke="none" stroke-width="0" />
<ellipse cx="450.0" cy="570.5" rx="3.2" ry="2.6" fill="#909090" stroke="none" stroke-width="0" />
<ellipse cx="450.0" cy="574.5" rx="3.4" ry="3.4" fill="#d01818" stroke="#800" stroke-width="0.4" />
<line x1="446.5" y1="571.0" x2="453.5" y2="579.0" stroke="#f0f0f0" stroke-width="0.9" />
<line x1="453.5" y1="571.0" x2="446.5" y2="579.0" stroke="#f0f0f0" stroke-width="0.9" />
<text x="446.5" y="631" font-family="Liberation Sans,sans-serif" font-size="9" fill="#e02020">Y</text>
<text x="528" y="574" font-family="Liberation Sans,sans-serif" font-size="9" fill="#8a8a8a" opacity="0.55">Z</text>
<rect x="122.5" y="945.5" width="23.5" height="21.5" fill="#8a9ab8" stroke="#e0e0e0" stroke-width="1" fill-opacity="0.45"/>
<line x1="122.0" y1="941.5" x2="190.0" y2="940.0" stroke="#10d0d8" stroke-width="2" />
<polygon points="186.0,937.0 196.0,940.3 186.0,944.0" fill="#28d8e0" stroke="none" stroke-width="0" />
<line x1="120.0" y1="950.0" x2="120.0" y2="983.0" stroke="#18b018" stroke-width="2.2" />
<line x1="120.3" y1="950.0" x2="120.3" y2="972.0" stroke="#e8f020" stroke-width="0.9" />
<polygon points="116.5,981.0 124.0,981.0 120.0,991.0" fill="#18a018" stroke="none" stroke-width="0" />
<ellipse cx="119.3" cy="940.5" rx="3.8" ry="3.0" fill="#9a9a9a" stroke="none" stroke-width="0" />
<ellipse cx="119.6" cy="945.0" rx="4.2" ry="4.4" fill="#d81818" stroke="#800" stroke-width="0.4" />
<line x1="115.5" y1="942.0" x2="124.0" y2="951.5" stroke="#f0f0f0" stroke-width="0.9" />
<line x1="124.0" y1="942.0" x2="115.5" y2="951.5" stroke="#f0f0f0" stroke-width="0.9" />
<text x="197.5" y="945" font-family="Liberation Sans,sans-serif" font-size="11" fill="#d8d8d8">Z</text>
<text x="116.3" y="1001" font-family="Liberation Sans,sans-serif" font-size="9" fill="#e02020">Y</text>
<g opacity="0.88" shape-rendering="auto" fill="url(#wm)" stroke="none">
<linearGradient id="wm2" x1="0" y1="0" x2="1" y2="1"><stop offset="0" stop-color="#ffb020"/><stop offset="1" stop-color="#f06a10"/></linearGradient>
<polygon points="891.3,517.1 893.8,517.9 893.8,536.7 891.3,538.4"/>
<polygon points="894.6,512.1 897.9,513.8 897.9,534.6 894.6,536.5"/>
<polygon points="898.8,507.9 902.5,510.4 902.5,532.5 898.8,534.4"/>
<path d="M891.3,538.6 L894.6,536.9 L898.8,534.8 Q905.0,536 909.0,538.6 L891.3,540 Z" />
<path d="M902.5,532.7 Q906.0,535.5 909.5,537.6 L908.5,538.6 Q904.0,536 902.5,534 Z" />
<polygon points="936.7,517.1 934.2,517.9 934.2,536.7 936.7,538.4"/>
<polygon points="933.4,512.1 930.1,513.8 930.1,534.6 933.4,536.5"/>
<polygon points="929.2,507.9 925.5,510.4 925.5,532.5 929.2,534.4"/>
<path d="M936.7,538.6 L933.4,536.9 L929.2,534.8 Q923.0,536 919.0,538.6 L936.7,540 Z" />
<path d="M925.5,532.7 Q922.0,535.5 918.5,537.6 L919.5,538.6 Q924.0,536 925.5,534 Z" />
<rect x="909" y="537.6" width="10" height="2.3" fill="#f4501a"/>
<path d="M913.6,510 Q902.5,513.5 904.2,522.5 Q905.3,526.3 908,527.8 Q906.3,519.5 913.6,515.8 Z" fill="url(#wm2)"/>
<path d="M921,519 Q924.2,527 919.5,532.2 Q916.6,535.3 912.6,535.4 L912.6,529.6 Q920.6,527.6 921,519 Z" fill="url(#wm2)"/>
<rect x="912" y="510.6" width="2.2" height="25.6" fill="url(#wm2)"/>
</g>
<text x="946.7" y="529.3" shape-rendering="auto" font-family="Liberation Sans,Noto Sans CJK SC,sans-serif" font-size="17" font-weight="normal" fill="#f28a24" stroke="#f28a24" stroke-width="0.4" opacity="0.92" textLength="82.5" lengthAdjust="spacingAndGlyphs">智造资料网</text>
<text x="947" y="538.3" font-family="Liberation Sans,sans-serif" font-size="5.6" font-weight="bold" fill="#f28a24" opacity="0.9" textLength="82" lengthAdjust="spacingAndGlyphs">INTELLIGENT MANUFACTURING DATA</text></svg>
<div class="tab" style="left:14px;width:17px"></div>
<div class="tab" style="left:31px;width:34px">编辑</div>
<div class="tab sel" style="left:64px;width:35px">标准</div>
<div class="tab" style="left:99px;width:46px">线架构</div>
<div class="tab" style="left:145px;width:34px">建模</div>
<div class="tab" style="left:179px;width:34px">曲面</div>
<div class="tab" style="left:213px;width:34px">尺寸</div>
<div class="tab" style="left:247px;width:34px">应用</div>
<div class="tab" style="left:281px;width:34px">塑膜</div>
<div class="tab" style="left:315px;width:34px">冲模</div>
<div class="tab" style="left:349px;width:34px">加工</div>
<div class="tab" style="left:383px;width:34px">模流</div>
<svg class="abs" style="left:17px;top:51px" width="9" height="6"><path d="M0,0.5 h9 l-4.5,5 Z" fill="#000"/></svg>
<div class="abs" style="left:2px;top:3px;width:16px;height:15px;background:linear-gradient(#7cc44c,#58a830);color:#fff;font-weight:bold;font-size:14px;line-height:13px;text-align:center">v</div>
<div class="abs" style="left:20px;top:4px;width:1px;height:14px;background:#aaa"></div>
<svg class="abs" style="left:31px;top:1px" width="22" height="22" viewBox="0 0 22 22"><defs><linearGradient id="nd" x1="0" y1="0" x2="1" y2="1"><stop offset="0.3" stop-color="#fff"/><stop offset="1" stop-color="#a8bcf0"/></linearGradient></defs><path d="M3,3.500 h8 l4.500,4.500 v11 h-12.500 Z" fill="url(#nd)" stroke="#000" stroke-width="1.4"/><path d="M11,3.500 v4.500 h4.500" fill="#e8eefc" stroke="#000" stroke-width="1"/></svg>
<svg class="abs" style="left:54px;top:1px" width="22" height="22" viewBox="0 0 22 22"><path d="M1,8 h16 v12 h-16 Z" fill="#e8c040" stroke="#8a6a00" stroke-width="0.8"/><path d="M1,20 l4,-9 h16 l-4,9 Z" fill="#f8e080" stroke="#8a6a00" stroke-width="0.8"/><path d="M9,7 q4,-7 10,-2 l2,-2 v7 h-7 l2,-2 q-3,-3 -5,0 Z" fill="#30b030" stroke="#0a5a0a" stroke-width="0.5"/></svg>
<svg class="abs" style="left:78px;top:1px" width="22" height="22" viewBox="0 0 22 22"><path d="M2,6 h8 l3,3 v11 h-11 Z" fill="#f0d060" stroke="#8a6a00" stroke-width="0.8"/><path d="M8,3 h8 l3,3 v13 h-11 Z" fill="#fff" stroke="#555" stroke-width="0.8"/><path d="M10,9 h7 M10,12 h7 M10,15 h7" stroke="#88a" stroke-width="0.8"/></svg>
<svg class="abs" style="left:102px;top:1px" width="22" height="22" viewBox="0 0 22 22"><rect x="1.5" y="3" width="16" height="16" rx="1" fill="#4a68b8" stroke="#1c2c6a" stroke-width="0.9"/><rect x="4.220000000000001" y="3" width="10.56" height="8.0" fill="#fff"/><rect x="4.220000000000001" y="3" width="10.56" height="1.600" fill="#e03030"/><rect x="5.5" y="13.24" width="8.0" height="5.76" fill="#dfe4f0" stroke="#1c2c6a" stroke-width="0.5"/><rect x="6.94" y="14.2" width="2" height="4.16" fill="#1c2c6a"/></svg>
<svg class="abs" style="left:125px;top:1px" width="22" height="22" viewBox="0 0 22 22"><rect x="6.5" y="2.5" width="12" height="11.5" rx="1" fill="#4a68b8" stroke="#1c2c6a" stroke-width="0.9"/><rect x="8.54" y="2.5" width="7.92" height="5.75" fill="#fff"/><rect x="8.54" y="2.5" width="7.92" height="1.600" fill="#e03030"/><rect x="9.5" y="9.86" width="6.0" height="4.14" fill="#dfe4f0" stroke="#1c2c6a" stroke-width="0.5"/><rect x="10.58" y="10.549999999999999" width="2" height="2.99" fill="#1c2c6a"/><rect x="1.5" y="8" width="12" height="11.5" rx="1" fill="#4a68b8" stroke="#1c2c6a" stroke-width="0.9"/><rect x="3.54" y="8" width="7.92" height="5.75" fill="#fff"/><rect x="3.54" y="8" width="7.92" height="1.600" fill="#e03030"/><rect x="4.5" y="15.36" width="6.0" height="4.14" fill="#dfe4f0" stroke="#1c2c6a" stroke-width="0.5"/><rect x="5.58" y="16.049999999999997" width="2" height="2.99" fill="#1c2c6a"/></svg>
<svg class="abs" style="left:148px;top:1px" width="22" height="22" viewBox="0 0 22 22"><rect x="1.5" y="1.5" width="12" height="11.5" rx="1" fill="#4a68b8" stroke="#1c2c6a" stroke-width="0.9"/><rect x="3.54" y="1.5" width="7.92" height="5.75" fill="#fff"/><rect x="3.54" y="1.5" width="7.92" height="1.600" fill="#e03030"/><rect x="4.5" y="8.86" width="6.0" height="4.14" fill="#dfe4f0" stroke="#1c2c6a" stroke-width="0.5"/><rect x="5.58" y="9.549999999999999" width="2" height="2.99" fill="#1c2c6a"/><path d="M11,13 l4,-2 l5,2 l-4,2 Z M11,13 v5 l5,3 v-6 Z M16,15 v6 l4,-3 v-5 Z" fill="#b8b8b8" stroke="#333" stroke-width="0.7"/><path d="M14,4 q4,-3 6,2 l1.500,-1 l-1,4.500 l-4,-2 l1.500,-0.500 q-1,-2.500 -3.500,-1 Z" fill="#30a030"/></svg>
<svg class="abs" style="left:174px;top:1px" width="22" height="22" viewBox="0 0 22 22"><rect x="4" y="1.5" width="11" height="9" fill="#fff" stroke="#555" stroke-width="0.8"/><path d="M9.5,3 v5 M7,5.5 l2.5,-2.5 l2.5,2.5" stroke="#20a020" stroke-width="1.8" fill="none"/><path d="M1,10 h17 l1,8 h-19 Z" fill="#d8dce8" stroke="#444" stroke-width="0.8"/><rect x="0.5" y="17" width="19" height="3" fill="#9aa2b8" stroke="#444" stroke-width="0.6"/></svg>
<svg class="abs" style="left:196px;top:1px" width="22" height="22" viewBox="0 0 22 22"><circle cx="10.5" cy="10.5" r="9.5" fill="#4a9a4a" stroke="#2a6a2a" stroke-width="1"/><circle cx="10.5" cy="9.5" r="5.5" fill="#d8e8f8" stroke="#6a86a8" stroke-width="1.2"/><path d="M13.5,14 l4,5" stroke="#556" stroke-width="2.4"/></svg>
<svg class="abs" style="left:223px;top:1px" width="22" height="22" viewBox="0 0 22 22"><path d="M3,9 l7,-6 v4 q8,0 7,9 q0,3 -3,4 q3,-6 -4,-7 v4 Z" fill="#8a8a8a" stroke="#555" stroke-width="0.7"/><ellipse cx="11" cy="20" rx="6" ry="1.2" fill="#aaa" opacity="0.6"/></svg>
<svg class="abs" style="left:245px;top:1px" width="22" height="22" viewBox="0 0 22 22"><path d="M17,9 l-7,-6 v4 q-8,0 -7,9 q0,3 3,4 q-3,-6 4,-7 v4 Z" fill="#8a8a8a" stroke="#555" stroke-width="0.7"/><ellipse cx="9" cy="20" rx="6" ry="1.2" fill="#aaa" opacity="0.6"/></svg>
<svg class="abs" style="left:269px;top:1px" width="22" height="22" viewBox="0 0 22 22"><path d="M2,10 l7,-6 v4 q9,0 8,9 q0,3 -3,4 q3,-6 -5,-7 v4 Z" fill="#3a78d0" stroke="#1c4a90" stroke-width="0.7"/><path d="M2,13 h6 l-2.5,3.5 l2.5,3.5 h-6 l2.5,-3.5 Z" fill="#c8a040" stroke="#6a4a00" stroke-width="0.6"/></svg>
<svg class="abs" style="left:294px;top:8px" width="9" height="8"><path d="M0.5,0.5 h8" stroke="#000"/><path d="M0.5,3 h8 l-4,4 Z" fill="#000"/></svg>
<div class="abs" style="left:312px;top:4px;width:1px;height:14px;background:#aaa"></div>
<svg class="abs" style="left:1790px;top:0" width="130" height="22"><path d="M9,10.5 h10" stroke="#000" stroke-width="1"/><rect x="54.5" y="7.5" width="7" height="7" fill="#fff" stroke="#000"/><path d="M56.5,7.5 v-2 h7 v7 h-2" fill="none" stroke="#000"/><path d="M100,5 l10,10 M110,5 l-10,10" stroke="#000" stroke-width="1.1"/></svg>
<svg class="abs" style="left:1864px;top:26px" width="56" height="14"><path d="M6,10.5 h9" stroke="#888"/><rect x="24.5" y="4.500" width="6" height="6" fill="none" stroke="#887"/><path d="M26.5,4.5 v-2 h6 v6 h-2" fill="none" stroke="#887"/><path d="M42,2.500 l8,8 M50,2.500 l-8,8" stroke="#888"/></svg>
<svg class="abs" style="left:21px;top:67px" width="24" height="24" viewBox="0 0 24 24"><path d="M4,5 h13 v3 h-13 Z M5,9 h13 v3 h-13 Z" fill="#d0d8f0" stroke="#446" stroke-width="0.7"/><ellipse cx="10" cy="16" rx="7.5" ry="5" fill="#e8d8b0" stroke="#654" stroke-width="0.8"/><circle cx="6.500" cy="15.5" r="1.6" fill="#e02020"/><circle cx="10" cy="18" r="1.6" fill="#2060e0"/><circle cx="13.500" cy="16" r="1.6" fill="#20b020"/><path d="M12,14 L21,4" stroke="#a05010" stroke-width="2"/></svg>
<svg class="abs" style="left:47px;top:67px" width="24" height="24" viewBox="0 0 24 24"><rect x="3" y="3" width="11" height="13" fill="#e8ecf4" stroke="#333" stroke-width="0.8"/><rect x="9" y="1" width="11" height="13" fill="#cfd8ea" stroke="#333" stroke-width="0.8"/><g transform="translate(0,8) scale(0.9)"><defs><linearGradient id="eyeg" x1="0" y1="0" x2="0" y2="1"><stop offset="0" stop-color="#4a5a80"/><stop offset="0.5" stop-color="#8494b6"/><stop offset="1" stop-color="#c4cce0"/></linearGradient></defs><g transform="translate(1.5,1.5) scale(0.88)"><path d="M1,11 Q5,5 12,4 Q19,4 23,9 Q18,15 11,15 Q5,15 1,11 Z" fill="url(#eyeg)"/><path d="M0.5,10.500 Q6,3 13,3 Q20,3.500 23.500,8.500" fill="none" stroke="#2a3454" stroke-width="1.5"/><path d="M4,6 l-1.500,-2 M8,4 l-0.800,-2.400 M12.500,3 l0,-2.400 M17,3.600 l1,-2.200 M20.500,5.500 l1.600,-1.800" stroke="#2a3450" stroke-width="0.8"/><circle cx="12" cy="9" r="3.600" fill="#44557e" stroke="#1c2640" stroke-width="0.6"/><circle cx="12" cy="9" r="1.500" fill="#0c1226"/><circle cx="10.800" cy="7.800" r="0.900" fill="#dfe6f4"/></g></g></svg>
<svg class="abs" style="left:72px;top:67px" width="24" height="24" viewBox="0 0 24 24"><defs><linearGradient id="eyeg" x1="0" y1="0" x2="0" y2="1"><stop offset="0" stop-color="#4a5a80"/><stop offset="0.5" stop-color="#8494b6"/><stop offset="1" stop-color="#c4cce0"/></linearGradient></defs><g transform="translate(1.5,1.5) scale(0.88)"><path d="M1,11 Q5,5 12,4 Q19,4 23,9 Q18,15 11,15 Q5,15 1,11 Z" fill="url(#eyeg)"/><path d="M0.5,10.500 Q6,3 13,3 Q20,3.500 23.500,8.500" fill="none" stroke="#2a3454" stroke-width="1.5"/><path d="M4,6 l-1.500,-2 M8,4 l-0.800,-2.400 M12.500,3 l0,-2.400 M17,3.600 l1,-2.200 M20.500,5.500 l1.600,-1.800" stroke="#2a3450" stroke-width="0.8"/><circle cx="12" cy="9" r="3.600" fill="#44557e" stroke="#1c2640" stroke-width="0.6"/><circle cx="12" cy="9" r="1.500" fill="#0c1226"/><circle cx="10.800" cy="7.800" r="0.900" fill="#dfe6f4"/></g><path d="M3,17 h8 M7,13 v8" stroke="#62d830" stroke-width="3" fill="none"/><path d="M13.500,15.500 l6,-3 M14,21.500 q7,1 7,-3.500 q0,-3.500 -5,-3" fill="none" stroke="#3a78e0" stroke-width="1.7"/><path d="M20.500,10.800 l-2.800,0.400 l1.600,2.600 Z" fill="#3a78e0"/></svg>
<svg class="abs" style="left:98px;top:67px" width="24" height="24" viewBox="0 0 24 24"><defs><linearGradient id="eyeg" x1="0" y1="0" x2="0" y2="1"><stop offset="0" stop-color="#4a5a80"/><stop offset="0.5" stop-color="#8494b6"/><stop offset="1" stop-color="#c4cce0"/></linearGradient></defs><g transform="translate(1.5,1.5) scale(0.88)"><path d="M1,11 Q5,5 12,4 Q19,4 23,9 Q18,15 11,15 Q5,15 1,11 Z" fill="url(#eyeg)"/><path d="M0.5,10.500 Q6,3 13,3 Q20,3.500 23.500,8.500" fill="none" stroke="#2a3454" stroke-width="1.5"/><path d="M4,6 l-1.500,-2 M8,4 l-0.800,-2.400 M12.500,3 l0,-2.400 M17,3.600 l1,-2.200 M20.500,5.500 l1.600,-1.800" stroke="#2a3450" stroke-width="0.8"/><circle cx="12" cy="9" r="3.600" fill="#44557e" stroke="#1c2640" stroke-width="0.6"/><circle cx="12" cy="9" r="1.500" fill="#0c1226"/><circle cx="10.800" cy="7.800" r="0.900" fill="#dfe6f4"/></g><path d="M4,19 h9" stroke="#f0e400" stroke-width="3" fill="none"/><path d="M13.500,15.500 l6,-3 M14,21.500 q7,1 7,-3.500 q0,-3.500 -5,-3" fill="none" stroke="#3a78e0" stroke-width="1.7"/><path d="M20.500,10.800 l-2.800,0.400 l1.600,2.600 Z" fill="#3a78e0"/></svg>
<svg class="abs" style="left:124px;top:67px" width="24" height="24" viewBox="0 0 24 24"><g transform="translate(0,-1) scale(0.8) translate(3,0)"><defs><linearGradient id="eyeg" x1="0" y1="0" x2="0" y2="1"><stop offset="0" stop-color="#4a5a80"/><stop offset="0.5" stop-color="#8494b6"/><stop offset="1" stop-color="#c4cce0"/></linearGradient></defs><g transform="translate(1.5,1.5) scale(0.88)"><path d="M1,11 Q5,5 12,4 Q19,4 23,9 Q18,15 11,15 Q5,15 1,11 Z" fill="url(#eyeg)"/><path d="M0.5,10.500 Q6,3 13,3 Q20,3.500 23.500,8.500" fill="none" stroke="#2a3454" stroke-width="1.5"/><path d="M4,6 l-1.500,-2 M8,4 l-0.800,-2.400 M12.500,3 l0,-2.400 M17,3.600 l1,-2.200 M20.500,5.500 l1.600,-1.800" stroke="#2a3450" stroke-width="0.8"/><circle cx="12" cy="9" r="3.600" fill="#44557e" stroke="#1c2640" stroke-width="0.6"/><circle cx="12" cy="9" r="1.500" fill="#0c1226"/><circle cx="10.800" cy="7.800" r="0.900" fill="#dfe6f4"/></g></g><rect x="3.500" y="7" width="6.500" height="15" rx="2.500" fill="#151515"/><rect x="14" y="7" width="6.500" height="15" rx="2.500" fill="#151515"/><circle cx="6.800" cy="10.500" r="1.900" fill="#f0e020"/><circle cx="6.800" cy="14.500" r="1.900" fill="#f0e020"/><circle cx="6.800" cy="18.800" r="1.900" fill="#20d020"/><circle cx="17.300" cy="10.500" r="1.900" fill="#e82020"/><circle cx="17.300" cy="14.500" r="1.900" fill="#f0a020"/><circle cx="17.300" cy="18.800" r="1.900" fill="#f0c820"/></svg>
<svg class="abs" style="left:150px;top:67px" width="24" height="24" viewBox="0 0 24 24"><g transform="translate(0,-2)"><defs><linearGradient id="eyeg" x1="0" y1="0" x2="0" y2="1"><stop offset="0" stop-color="#4a5a80"/><stop offset="0.5" stop-color="#8494b6"/><stop offset="1" stop-color="#c4cce0"/></linearGradient></defs><g transform="translate(1.5,1.5) scale(0.88)"><path d="M1,11 Q5,5 12,4 Q19,4 23,9 Q18,15 11,15 Q5,15 1,11 Z" fill="url(#eyeg)"/><path d="M0.5,10.500 Q6,3 13,3 Q20,3.500 23.500,8.500" fill="none" stroke="#2a3454" stroke-width="1.5"/><path d="M4,6 l-1.500,-2 M8,4 l-0.800,-2.400 M12.500,3 l0,-2.400 M17,3.600 l1,-2.200 M20.500,5.500 l1.600,-1.800" stroke="#2a3450" stroke-width="0.8"/><circle cx="12" cy="9" r="3.600" fill="#44557e" stroke="#1c2640" stroke-width="0.6"/><circle cx="12" cy="9" r="1.500" fill="#0c1226"/><circle cx="10.800" cy="7.800" r="0.900" fill="#dfe6f4"/></g></g><g transform="translate(1,4) scale(0.9)"><path d="M5,14 a7,6 0 0 1 13,-3 l2,-2 v7 h-7 l2,-2 a4,3.5 0 0 0 -7,1 Z" fill="#e0d020" stroke="#586000" stroke-width="0.6"/><path d="M19,13 a7,6 0 0 1 -13,3 l-2,2 v-7 h7 l-2,2 a4,3.5 0 0 0 7,-1 Z" fill="#30b030" stroke="#0a5a0a" stroke-width="0.6"/></g></svg>
<svg class="abs" style="left:176px;top:67px" width="24" height="24" viewBox="0 0 24 24"><defs><linearGradient id="eyeg" x1="0" y1="0" x2="0" y2="1"><stop offset="0" stop-color="#4a5a80"/><stop offset="0.5" stop-color="#8494b6"/><stop offset="1" stop-color="#c4cce0"/></linearGradient></defs><g transform="translate(1.5,1.5) scale(0.88)"><path d="M1,11 Q5,5 12,4 Q19,4 23,9 Q18,15 11,15 Q5,15 1,11 Z" fill="url(#eyeg)"/><path d="M0.5,10.500 Q6,3 13,3 Q20,3.500 23.500,8.500" fill="none" stroke="#2a3454" stroke-width="1.5"/><path d="M4,6 l-1.500,-2 M8,4 l-0.800,-2.400 M12.500,3 l0,-2.400 M17,3.600 l1,-2.200 M20.500,5.500 l1.600,-1.800" stroke="#2a3450" stroke-width="0.8"/><circle cx="12" cy="9" r="3.600" fill="#44557e" stroke="#1c2640" stroke-width="0.6"/><circle cx="12" cy="9" r="1.500" fill="#0c1226"/><circle cx="10.800" cy="7.800" r="0.900" fill="#dfe6f4"/></g><path d="M2,15 h8 M6,11 v8" stroke="#62d830" stroke-width="3" fill="none"/><path d="M10,20 L16,13" stroke="#222" stroke-width="1.2"/><path d="M14,20 h8" stroke="#f0e400" stroke-width="3"/></svg>
<svg class="abs" style="left:202px;top:67px" width="24" height="24" viewBox="0 0 24 24"><defs><linearGradient id="eyeg" x1="0" y1="0" x2="0" y2="1"><stop offset="0" stop-color="#4a5a80"/><stop offset="0.5" stop-color="#8494b6"/><stop offset="1" stop-color="#c4cce0"/></linearGradient></defs><g transform="translate(1.5,1.5) scale(0.88)"><path d="M1,11 Q5,5 12,4 Q19,4 23,9 Q18,15 11,15 Q5,15 1,11 Z" fill="url(#eyeg)"/><path d="M0.5,10.500 Q6,3 13,3 Q20,3.500 23.500,8.500" fill="none" stroke="#2a3454" stroke-width="1.5"/><path d="M4,6 l-1.500,-2 M8,4 l-0.800,-2.400 M12.500,3 l0,-2.400 M17,3.600 l1,-2.200 M20.500,5.500 l1.600,-1.800" stroke="#2a3450" stroke-width="0.8"/><circle cx="12" cy="9" r="3.600" fill="#44557e" stroke="#1c2640" stroke-width="0.6"/><circle cx="12" cy="9" r="1.500" fill="#0c1226"/><circle cx="10.800" cy="7.800" r="0.900" fill="#dfe6f4"/></g><path d="M8,17 h10 M13,12 v10" stroke="#62d830" stroke-width="3.4" fill="none"/></svg>
<svg class="abs" style="left:228px;top:67px" width="24" height="24" viewBox="0 0 24 24"><defs><linearGradient id="eyeg" x1="0" y1="0" x2="0" y2="1"><stop offset="0" stop-color="#4a5a80"/><stop offset="0.5" stop-color="#8494b6"/><stop offset="1" stop-color="#c4cce0"/></linearGradient></defs><g transform="translate(1.5,1.5) scale(0.88)"><path d="M1,11 Q5,5 12,4 Q19,4 23,9 Q18,15 11,15 Q5,15 1,11 Z" fill="url(#eyeg)"/><path d="M0.5,10.500 Q6,3 13,3 Q20,3.500 23.500,8.500" fill="none" stroke="#2a3454" stroke-width="1.5"/><path d="M4,6 l-1.500,-2 M8,4 l-0.800,-2.400 M12.500,3 l0,-2.400 M17,3.600 l1,-2.200 M20.500,5.500 l1.600,-1.800" stroke="#2a3450" stroke-width="0.8"/><circle cx="12" cy="9" r="3.600" fill="#44557e" stroke="#1c2640" stroke-width="0.6"/><circle cx="12" cy="9" r="1.500" fill="#0c1226"/><circle cx="10.800" cy="7.800" r="0.900" fill="#dfe6f4"/></g><path d="M8,18 h10" stroke="#f0e400" stroke-width="3.4" fill="none"/></svg>
<svg class="abs" style="left:271px;top:67px" width="24" height="24" viewBox="0 0 24 24"><path d="M4,11 a8,7 0 0 1 14,-4 l2,-2 v7 h-7 l2.5,-2.5 a5,4.5 0 0 0 -8,2 Z" fill="#5a9ae0" stroke="#1c4a90" stroke-width="0.7"/><path d="M20,13 a8,7 0 0 1 -14,4 l-2,2 v-7 h7 l-2.5,2.5 a5,4.5 0 0 0 8,-2 Z" fill="#7ab4f0" stroke="#1c4a90" stroke-width="0.7"/></svg>
<svg class="abs" style="left:298px;top:67px" width="24" height="24" viewBox="0 0 24 24"><path d="M7,6 v12 a5.25,2.5 0 0 0 10.5,0 v-12" fill="none" stroke="#222" stroke-width="0.9"/><ellipse cx="12.25" cy="6" rx="5.25" ry="2.5" fill="none" stroke="#222" stroke-width="0.9"/></svg>
<svg class="abs" style="left:324px;top:67px" width="24" height="24" viewBox="0 0 24 24"><path d="M7,6 v12 a5.25,2.5 0 0 0 10.5,0 v-12" fill="none" stroke="#222" stroke-width="0.9"/><ellipse cx="12.25" cy="6" rx="5.25" ry="2.5" fill="none" stroke="#222" stroke-width="0.9"/></svg>
<svg class="abs" style="left:350px;top:67px" width="24" height="24" viewBox="0 0 24 24"><path d="M7,6 v12 a5.25,2.5 0 0 0 10.5,0 v-12" fill="none" stroke="#222" stroke-width="0.9"/><ellipse cx="12.25" cy="6" rx="5.25" ry="2.5" fill="none" stroke="#222" stroke-width="0.9"/><path d="M7,17.500 a5,2.5 0 0 1 10,0" fill="none" stroke="#444" stroke-width="0.7"/></svg>
<svg class="abs" style="left:376px;top:67px" width="24" height="24" viewBox="0 0 24 24"><defs><linearGradient id="bc" x1="0" x2="1"><stop offset="0" stop-color="#2e62b0"/><stop offset="0.45" stop-color="#7fb0ea"/><stop offset="1" stop-color="#1c4a90"/></linearGradient></defs><path d="M7,6 v12 a5.25,2.5 0 0 0 10.5,0 v-12" fill="url(#bc)" stroke="#18a8e0" stroke-width="0.9"/><ellipse cx="12.25" cy="6" rx="5.25" ry="2.5" fill="#8ac0f0" stroke="#18a8e0" stroke-width="0.9"/></svg>
<div class="abs" style="left:401px;top:66px;width:24px;height:24px;background:#fbdb6e;border:1px solid #e8b848"></div>
<svg class="abs" style="left:402px;top:67px" width="24" height="24" viewBox="0 0 24 24"><defs><linearGradient id="bc" x1="0" x2="1"><stop offset="0" stop-color="#2e62b0"/><stop offset="0.45" stop-color="#7fb0ea"/><stop offset="1" stop-color="#1c4a90"/></linearGradient></defs><path d="M7,6 v12 a5.25,2.5 0 0 0 10.5,0 v-12" fill="url(#bc)" stroke="#123" stroke-width="0.9"/><ellipse cx="12.25" cy="6" rx="5.25" ry="2.5" fill="#8ab8ee" stroke="#123" stroke-width="0.9"/></svg>
<svg class="abs" style="left:428px;top:67px" width="24" height="24" viewBox="0 0 24 24"><path d="M7,6 v12 a5.25,2.5 0 0 0 10.5,0 v-12" fill="#dde2f2" stroke="#40dcee" stroke-width="0.9"/><ellipse cx="12.25" cy="6" rx="5.25" ry="2.5" fill="#eef2fa" stroke="#40dcee" stroke-width="0.9"/></svg>
<svg class="abs" style="left:454px;top:67px" width="24" height="24" viewBox="0 0 24 24"><path d="M7,6 v12 a5.25,2.5 0 0 0 10.5,0 v-12" fill="#c8d6ee" stroke="#5a6a8a" stroke-width="0.9"/><ellipse cx="12.25" cy="6" rx="5.25" ry="2.5" fill="#e4ecf8" stroke="#5a6a8a" stroke-width="0.9"/></svg>
<svg class="abs" style="left:480px;top:67px" width="24" height="24" viewBox="0 0 24 24"><path d="M7,6 v12 a5.25,2.5 0 0 0 10.5,0 v-12" fill="#e0e0e0" stroke="#333" stroke-width="0.9"/><ellipse cx="12.25" cy="6" rx="5.25" ry="2.5" fill="#f0f0f0" stroke="#333" stroke-width="0.9"/><path d="M9,7 l2,12 M12,7 v13 M15,7 l-2,12 M8,12 l8,2" stroke="#333" stroke-width="0.7" fill="none"/></svg>
<svg class="abs" style="left:505px;top:67px" width="24" height="24" viewBox="0 0 24 24"><path d="M3,4.5 v9 a4.5,2.5 0 0 0 9,0 v-9" fill="#d8d8d8" stroke="#444" stroke-width="0.9"/><ellipse cx="7.5" cy="4.5" rx="4.5" ry="2.5" fill="#eee" stroke="#444" stroke-width="0.9"/><defs><linearGradient id="bc" x1="0" x2="1"><stop offset="0" stop-color="#2e62b0"/><stop offset="0.45" stop-color="#7fb0ea"/><stop offset="1" stop-color="#1c4a90"/></linearGradient></defs><path d="M11,10.5 v9 a4.5,2.5 0 0 0 9,0 v-9" fill="url(#bc)" stroke="#123" stroke-width="0.9"/><ellipse cx="15.5" cy="10.5" rx="4.5" ry="2.5" fill="#8ab8ee" stroke="#123" stroke-width="0.9"/><path d="M12,3 q5,-2 7,3 l2,-1 l-1.500,4.500 l-4,-2 l2,-0.500 q-1.500,-3 -5,-1.500 Z" fill="#30a030"/></svg>
<svg class="abs" style="left:531px;top:67px" width="24" height="24" viewBox="0 0 24 24"><defs><linearGradient id="bc" x1="0" x2="1"><stop offset="0" stop-color="#2e62b0"/><stop offset="0.45" stop-color="#7fb0ea"/><stop offset="1" stop-color="#1c4a90"/></linearGradient></defs><path d="M3,5.5 v11 a5,2.5 0 0 0 10,0 v-11" fill="url(#bc)" stroke="#123" stroke-width="0.9"/><ellipse cx="8" cy="5.5" rx="5" ry="2.5" fill="#8ab8ee" stroke="#123" stroke-width="0.9"/><rect x="9" y="8" width="12" height="12" fill="#4a7ac8" stroke="#123" stroke-width="0.8"/><path d="M12,15 a3,3 0 1 1 3,3 M15,18 l1.500,-2.500 M15,18 l-2.500,-1" stroke="#fff" stroke-width="1.3" fill="none"/></svg>
<svg class="abs" style="left:558px;top:67px" width="24" height="24" viewBox="0 0 24 24"><rect x="3" y="4" width="15" height="12" fill="#5a82c8" stroke="#24407a" stroke-width="0.9"/><rect x="5" y="6" width="11" height="8" fill="#9ab8e8"/><path d="M6,20 L20,7 M8,8 l12,12" stroke="#777" stroke-width="2.6"/><path d="M6,20 L20,7 M8,8 l12,12" stroke="#ddd" stroke-width="1"/></svg>
<svg class="abs" style="left:600px;top:67px" width="24" height="24" viewBox="0 0 24 24"><path d="M2,5 l4.500,-2.500 l5,2 l-4.500,2.500 Z" fill="#c8c8c8" stroke="#222" stroke-width="0.8"/><path d="M2,5 v6.500 l5,2.500 v-7 Z" fill="#8c8c8c" stroke="#222" stroke-width="0.8"/><path d="M7,7 v7 l4.500,-2.500 v-6.500 Z" fill="#5c5c5c" stroke="#222" stroke-width="0.8"/><path d="M11,5 l5,-2.500 l6,2 l-5,2.500 Z M11,5 v6.500 l6,2.500 v-7 Z M17,7 v7 l5,-2.500 v-7" fill="#f4f4f8" stroke="#222" stroke-width="0.8"/><path d="M3,17 h8 M7,13 v8" stroke="#62d830" stroke-width="3" fill="none"/><path d="M13.500,15.500 l6,-3 M14,21.500 q7,1 7,-3.500 q0,-3.500 -5,-3" fill="none" stroke="#3a78e0" stroke-width="1.7"/><path d="M20.500,10.800 l-2.800,0.400 l1.600,2.600 Z" fill="#3a78e0"/></svg>
<svg class="abs" style="left:626px;top:67px" width="24" height="24" viewBox="0 0 24 24"><path d="M2,5 l4.500,-2.500 l5,2 l-4.500,2.500 Z" fill="#c8c8c8" stroke="#222" stroke-width="0.8"/><path d="M2,5 v6.500 l5,2.500 v-7 Z" fill="#8c8c8c" stroke="#222" stroke-width="0.8"/><path d="M7,7 v7 l4.500,-2.500 v-6.500 Z" fill="#5c5c5c" stroke="#222" stroke-width="0.8"/><path d="M11,5 l5,-2.500 l6,2 l-5,2.500 Z M11,5 v6.500 l6,2.500 v-7 Z M17,7 v7 l5,-2.500 v-7" fill="#f4f4f8" stroke="#222" stroke-width="0.8"/><rect x="3.500" y="8" width="6.500" height="14" rx="2.500" fill="#151515"/><rect x="14" y="8" width="6.500" height="14" rx="2.500" fill="#151515"/><circle cx="6.800" cy="11.500" r="1.900" fill="#f0c820"/><circle cx="6.800" cy="15" r="1.900" fill="#f0e020"/><circle cx="6.800" cy="18.800" r="1.900" fill="#20d020"/><circle cx="17.300" cy="11.500" r="1.900" fill="#e82020"/><circle cx="17.300" cy="15" r="1.900" fill="#e84020"/><circle cx="17.300" cy="18.800" r="1.900" fill="#f0c820"/></svg>
<svg class="abs" style="left:652px;top:67px" width="24" height="24" viewBox="0 0 24 24"><path d="M2,5 l4.500,-2.500 l5,2 l-4.500,2.500 Z" fill="#c8c8c8" stroke="#222" stroke-width="0.8"/><path d="M2,5 v6.500 l5,2.500 v-7 Z" fill="#8c8c8c" stroke="#222" stroke-width="0.8"/><path d="M7,7 v7 l4.500,-2.500 v-6.500 Z" fill="#5c5c5c" stroke="#222" stroke-width="0.8"/><path d="M11,5 l5,-2.500 l6,2 l-5,2.500 Z M11,5 v6.500 l6,2.500 v-7 Z M17,7 v7 l5,-2.500 v-7" fill="#f4f4f8" stroke="#222" stroke-width="0.8"/><g transform="translate(0.500,5) scale(0.95)"><path d="M5,14 a7,6 0 0 1 13,-3 l2,-2 v7 h-7 l2,-2 a4,3.5 0 0 0 -7,1 Z" fill="#e0d020" stroke="#586000" stroke-width="0.6"/><path d="M19,13 a7,6 0 0 1 -13,3 l-2,2 v-7 h7 l-2,2 a4,3.5 0 0 0 7,-1 Z" fill="#30b030" stroke="#0a5a0a" stroke-width="0.6"/></g></svg>
<svg class="abs" style="left:678px;top:67px" width="24" height="24" viewBox="0 0 24 24"><path d="M2,5 l4.500,-2.500 l5,2 l-4.500,2.500 Z" fill="#c8c8c8" stroke="#222" stroke-width="0.8"/><path d="M2,5 v6.500 l5,2.500 v-7 Z" fill="#8c8c8c" stroke="#222" stroke-width="0.8"/><path d="M7,7 v7 l4.500,-2.500 v-6.500 Z" fill="#5c5c5c" stroke="#222" stroke-width="0.8"/><path d="M11,5 l5,-2.500 l6,2 l-5,2.500 Z M11,5 v6.500 l6,2.500 v-7 Z M17,7 v7 l5,-2.500 v-7" fill="#f4f4f8" stroke="#222" stroke-width="0.8"/><path d="M2,15 h8 M6,11 v8" stroke="#62d830" stroke-width="3" fill="none"/><path d="M10,21 L16,13" stroke="#222" stroke-width="1.2"/><path d="M14,20.500 h8" stroke="#f0e400" stroke-width="3"/></svg>
<svg class="abs" style="left:705px;top:67px" width="24" height="24" viewBox="0 0 24 24"><ellipse cx="15" cy="21.500" rx="7" ry="1.400" fill="#7a8090" opacity="0.55"/><defs><linearGradient id="bc" x1="0" x2="1"><stop offset="0" stop-color="#2e62b0"/><stop offset="0.45" stop-color="#7fb0ea"/><stop offset="1" stop-color="#1c4a90"/></linearGradient></defs><path d="M7.5,5.5 v13.5 a5,2.5 0 0 0 10,0 v-13.5" fill="url(#bc)" stroke="#123" stroke-width="0.9"/><ellipse cx="12.5" cy="5.5" rx="5" ry="2.5" fill="#8ab8ee" stroke="#123" stroke-width="0.9"/><path d="M12.500,8 v12" stroke="#0a1430" stroke-width="1.100" stroke-dasharray="2.200 1.600"/></svg>
<svg class="abs" style="left:731px;top:67px" width="24" height="24" viewBox="0 0 24 24"><ellipse cx="15" cy="21.500" rx="7" ry="1.400" fill="#7a8090" opacity="0.55"/><path d="M7.5,5.5 v13.5 a5,2.5 0 0 0 10,0 v-13.5" fill="#c0c4d0" stroke="#222" stroke-width="0.9"/><ellipse cx="12.5" cy="5.5" rx="5" ry="2.5" fill="#e8e8ee" stroke="#222" stroke-width="0.9"/><path d="M10.500,8.500 v12 M15,8.500 v12" stroke="#f0e020" stroke-width="1.300"/><path d="M12.800,9 v12" stroke="#3050a0" stroke-width="1.300"/></svg>
<svg class="abs" style="left:757px;top:67px" width="24" height="24" viewBox="0 0 24 24"><ellipse cx="15" cy="21.500" rx="7" ry="1.400" fill="#7a8090" opacity="0.55"/><path d="M7,5.5 v13.5 a5.5,2.5 0 0 0 11,0 v-13.5" fill="#d4dcf0" stroke="#30d8ec" stroke-width="0.9"/><ellipse cx="12.5" cy="5.5" rx="5.5" ry="2.5" fill="#e8eef8" stroke="#30d8ec" stroke-width="0.9"/><path d="M9,13 l3.500,5 l6,-9" stroke="#30b020" stroke-width="3" fill="none"/></svg>
<svg class="abs" style="left:783px;top:67px" width="24" height="24" viewBox="0 0 24 24"><ellipse cx="10" cy="20.500" rx="8" ry="1.400" fill="#7a8090" opacity="0.55"/><path d="M6,7.5 v11.5 a5.5,2.5 0 0 0 11,0 v-11.5" fill="#d4dcf0" stroke="#30d8ec" stroke-width="0.9"/><ellipse cx="11.5" cy="7.5" rx="5.5" ry="2.5" fill="#e8eef8" stroke="#30d8ec" stroke-width="0.9"/><path d="M6,17 a5.500,2.500 0 0 1 11,0" fill="none" stroke="#30d8ec" stroke-width="0.7"/><rect x="15.500" y="2.500" width="6" height="6" fill="#f4d8a8" stroke="#d87818" stroke-width="1.300"/><path d="M17,7 q0,-3 3,-3" stroke="#d83818" stroke-width="1" fill="none"/></svg>
<svg class="abs" style="left:809px;top:67px" width="24" height="24" viewBox="0 0 24 24"><path d="M7,5.5 v13.5 a5.25,2.5 0 0 0 10.5,0 v-13.5" fill="#e4ecfa" stroke="#6aa8e8" stroke-width="0.9"/><ellipse cx="12.25" cy="5.5" rx="5.25" ry="2.5" fill="#f0f6fe" stroke="#6aa8e8" stroke-width="0.9"/><path d="M9,8 l2.500,12 M12.300,8 v13 M15.500,8 l-2.500,12 M8,13 l9,3 M8,17 l9,-5" stroke="#6aa8e8" stroke-width="0.7" fill="none"/></svg>
<svg class="abs" style="left:835px;top:67px" width="24" height="24" viewBox="0 0 24 24"><path d="M3,7.500 l9,-4 l9,4 l-9,4 Z" fill="#6a9ae0" stroke="#0a1a4a" stroke-width="1"/><path d="M3,7.500 q0,8 9,14.500 v-10.500 Z" fill="#1c3a80" stroke="#0a1a4a" stroke-width="1"/><path d="M12,11.500 v10.500 q9,-6.500 9,-14.500 Z" fill="#2a58b0" stroke="#0a1a4a" stroke-width="1"/></svg>
<svg class="abs" style="left:876px;top:67px" width="24" height="24" viewBox="0 0 24 24"><circle cx="14" cy="10" r="6" fill="#cfe2f8" stroke="#6a86a8" stroke-width="1.6"/><circle cx="12.5" cy="8.5" r="2.5" fill="#fff" opacity="0.8"/><path d="M9.5,14.5 L4,21" stroke="#888" stroke-width="3"/><path d="M5,6 q-3,4 0,8 M8,4 q-3,4 -1,9" stroke="#9aa" stroke-width="1.5" fill="none"/><path d="M2,4 h5 M4.500,1.500 v5 M2,9 h4" stroke="#000" stroke-width="1"/><path d="M14,14 l4,-2 l4,2 v5 l-4,2 l-4,-2 Z" fill="#777" stroke="#333" stroke-width="0.6"/></svg>
<svg class="abs" style="left:902px;top:67px" width="24" height="24" viewBox="0 0 24 24"><circle cx="14" cy="10" r="6" fill="#cfe2f8" stroke="#6a86a8" stroke-width="1.6"/><circle cx="12.5" cy="8.5" r="2.5" fill="#fff" opacity="0.8"/><path d="M9.5,14.5 L4,21" stroke="#888" stroke-width="3"/><path d="M5,6 q-3,4 0,8 M8,4 q-3,4 -1,9" stroke="#9aa" stroke-width="1.5" fill="none"/><path d="M2,3 l5,1 l-4,4 Z M22,3 l-1,5 l-4,-4 Z" fill="#30c030" stroke="#107010" stroke-width="0.5"/><path d="M14,14 l4,-2 l4,2 v5 l-4,2 l-4,-2 Z" fill="#777" stroke="#333" stroke-width="0.6"/></svg>
<svg class="abs" style="left:928px;top:67px" width="24" height="24" viewBox="0 0 24 24"><rect x="6" y="7" width="12" height="10" fill="#e8eef8" stroke="#777" stroke-width="1"/><path d="M2,3 l5,1 l-4,4 Z M22,3 l-1,5 l-4,-4 Z M2,21 l1,-5 l4,4 Z M22,21 l-5,-1 l4,-4 Z" fill="#30c030" stroke="#107010" stroke-width="0.5"/><text x="12" y="15.500" font-size="7" text-anchor="middle" font-family="Liberation Sans,sans-serif" font-weight="bold">1:1</text></svg>
<svg class="abs" style="left:954px;top:67px" width="24" height="24" viewBox="0 0 24 24"><path d="M5,19 L19,5" stroke="#20a020" stroke-width="2.6"/><path d="M21,3 l-7,1.500 l5.500,5.500 Z" fill="#20a020"/><circle cx="5" cy="19" r="3" fill="#ddd" stroke="#555" stroke-width="0.8"/></svg>
<svg class="abs" style="left:980px;top:67px" width="24" height="24" viewBox="0 0 24 24"><path d="M4,12 a8,8 0 0 1 14,-5 l2,-2 v7 h-7 l2.500,-2.500 a5,5 0 0 0 -8,2.500 Z" fill="#30b030" stroke="#0a5a0a" stroke-width="0.8"/><path d="M20,13 a8,8 0 0 1 -14,5 l-2,2 v-7 h7 l-2.500,2.500 a5,5 0 0 0 8,-2.500 Z" fill="#30b030" stroke="#0a5a0a" stroke-width="0.8"/></svg>
<svg class="abs" style="left:1006px;top:67px" width="24" height="24" viewBox="0 0 24 24"><g transform="translate(0,-3)"><defs><linearGradient id="eyeg" x1="0" y1="0" x2="0" y2="1"><stop offset="0" stop-color="#4a5a80"/><stop offset="0.5" stop-color="#8494b6"/><stop offset="1" stop-color="#c4cce0"/></linearGradient></defs><g transform="translate(1.5,1.5) scale(0.88)"><path d="M1,11 Q5,5 12,4 Q19,4 23,9 Q18,15 11,15 Q5,15 1,11 Z" fill="url(#eyeg)"/><path d="M0.5,10.500 Q6,3 13,3 Q20,3.500 23.500,8.500" fill="none" stroke="#2a3454" stroke-width="1.5"/><path d="M4,6 l-1.500,-2 M8,4 l-0.800,-2.400 M12.500,3 l0,-2.400 M17,3.600 l1,-2.200 M20.500,5.500 l1.600,-1.800" stroke="#2a3450" stroke-width="0.8"/><circle cx="12" cy="9" r="3.600" fill="#44557e" stroke="#1c2640" stroke-width="0.6"/><circle cx="12" cy="9" r="1.500" fill="#0c1226"/><circle cx="10.800" cy="7.800" r="0.900" fill="#dfe6f4"/></g></g><circle cx="12" cy="17" r="5.500" fill="#f8d030" stroke="#a07800" stroke-width="0.8"/><circle cx="10" cy="16" r="0.800"/><circle cx="14" cy="16" r="0.800"/><path d="M9.500,18.500 q2.500,2 5,0" fill="none" stroke="#000" stroke-width="0.7"/></svg>
<svg class="abs" style="left:1050px;top:67px" width="24" height="24" viewBox="0 0 24 24"><path d="M11,15 L3,9 L12,5 L21,10 Z" fill="#e0e4ee" stroke="#99a" stroke-width="0.6"/><path d="M11,15 V3" stroke="#2060e0" stroke-width="1.8"/><path d="M11,1 l-2.5,4 h5 Z" fill="#2060e0"/><path d="M11,15 L19,8" stroke="#20b020" stroke-width="1.8"/><path d="M11,15 L19,21" stroke="#e02020" stroke-width="1.8"/><path d="M21,22 l-4.5,-1 l3,-3 Z" fill="#e02020"/><circle cx="11" cy="15" r="1.6" fill="#fff" stroke="#555" stroke-width="0.6"/></svg>
<svg class="abs" style="left:1076px;top:67px" width="24" height="24" viewBox="0 0 24 24"><g transform="scale(0.8) translate(6,5)"><path d="M11,15 L3,9 L12,5 L21,10 Z" fill="#e0e4ee" stroke="#99a" stroke-width="0.6"/><path d="M11,15 V3" stroke="#2060e0" stroke-width="1.8"/><path d="M11,1 l-2.5,4 h5 Z" fill="#2060e0"/><path d="M11,15 L19,8" stroke="#20b020" stroke-width="1.8"/><path d="M11,15 L19,21" stroke="#e02020" stroke-width="1.8"/><path d="M21,22 l-4.5,-1 l3,-3 Z" fill="#e02020"/><circle cx="11" cy="15" r="1.6" fill="#fff" stroke="#555" stroke-width="0.6"/></g><path d="M3,17 l5,-8 l5,8 Z" fill="#30b030" stroke="#0a5a0a" stroke-width="0.6"/><path d="M10,12 h6 v4" stroke="#0a5a0a" stroke-width="1.4" fill="none"/></svg>
<svg class="abs" style="left:1102px;top:67px" width="24" height="24" viewBox="0 0 24 24"><g transform="scale(0.8) translate(7,1)"><path d="M11,15 L3,9 L12,5 L21,10 Z" fill="#e0e4ee" stroke="#99a" stroke-width="0.6"/><path d="M11,15 V3" stroke="#2060e0" stroke-width="1.8"/><path d="M11,1 l-2.5,4 h5 Z" fill="#2060e0"/><path d="M11,15 L19,8" stroke="#20b020" stroke-width="1.8"/><path d="M11,15 L19,21" stroke="#e02020" stroke-width="1.8"/><path d="M21,22 l-4.5,-1 l3,-3 Z" fill="#e02020"/><circle cx="11" cy="15" r="1.6" fill="#fff" stroke="#555" stroke-width="0.6"/></g><path d="M2,14 l8,-4 v3 l8,6 l-3,3 l-8,-6 Z" fill="#30b030" stroke="#0a5a0a" stroke-width="0.7"/></svg>
<svg class="abs" style="left:1144px;top:67px" width="24" height="24" viewBox="0 0 24 24"><rect x="2" y="2" width="6.500" height="6.500" fill="#00c8f0" stroke="#333" stroke-width="0.4"/><rect x="9" y="2" width="6.500" height="6.500" fill="#f0e000" stroke="#333" stroke-width="0.4"/><rect x="16" y="2" width="6.500" height="6.500" fill="#00e000" stroke="#333" stroke-width="0.4"/><rect x="2" y="9" width="6.500" height="6.500" fill="#f08000" stroke="#333" stroke-width="0.4"/><rect x="9" y="9" width="6.500" height="6.500" fill="#a06000" stroke="#333" stroke-width="0.4"/><rect x="16" y="9" width="6.500" height="6.500" fill="#f000f0" stroke="#333" stroke-width="0.4"/><rect x="2" y="16" width="6.500" height="6.500" fill="#0020e0" stroke="#333" stroke-width="0.4"/><rect x="9" y="16" width="6.500" height="6.500" fill="#20a020" stroke="#333" stroke-width="0.4"/><rect x="16" y="16" width="6.500" height="6.500" fill="#808080" stroke="#333" stroke-width="0.4"/></svg>
<svg class="abs" style="left:1171px;top:67px" width="24" height="24" viewBox="0 0 24 24"><rect x="5" y="2" width="14" height="20" fill="#eef2fa" stroke="#456" stroke-width="1"/><rect x="7" y="4" width="10" height="4" fill="#8ab0e0"/><rect x="7" y="10" width="3" height="3" fill="#00c8f0"/><rect x="10" y="10" width="3" height="3" fill="#f0e000"/><rect x="14" y="10" width="3" height="3" fill="#00e000"/><rect x="7" y="13" width="3" height="3" fill="#f08000"/><rect x="10" y="13" width="3" height="3" fill="#a06000"/><rect x="14" y="13" width="3" height="3" fill="#f000f0"/><rect x="7" y="17" width="3" height="3" fill="#0020e0"/><rect x="10" y="17" width="3" height="3" fill="#20a020"/><rect x="14" y="17" width="3" height="3" fill="#808080"/></svg>
<svg class="abs" style="left:1197px;top:67px" width="24" height="24" viewBox="0 0 24 24"><circle cx="12" cy="12" r="10" fill="#5a9a3a" stroke="#2a5a1a" stroke-width="1"/><path d="M6,18 L18,6 M7,7 l10,10" stroke="#e8e8e8" stroke-width="3"/><path d="M6,18 L18,6 M7,7 l10,10" stroke="#888" stroke-width="0.8"/></svg>
<svg class="abs" style="left:1223px;top:67px" width="24" height="24" viewBox="0 0 24 24"><rect x="2" y="3" width="20" height="18" fill="#e8eef8" stroke="#24407a" stroke-width="1"/><rect x="2" y="3" width="20" height="4" fill="#4a78c8"/><path d="M5,10 h2 M5,14 h2 M5,18 h2 M10,10 h2 M10,14 h2" stroke="#24407a" stroke-width="1.6"/><path d="M9,20 L19,9 M11,10 l9,10" stroke="#666" stroke-width="2.200"/></svg>
<svg class="abs" style="left:1249px;top:67px" width="24" height="24" viewBox="0 0 24 24"><rect x="2.500" y="3.500" width="18" height="16" fill="none" stroke="#24407a" stroke-width="1.2" stroke-dasharray="2 2"/><path d="M8,16 l4,-7 l8,-2 l-2,6 l-6,5 Z" fill="#e8b060" stroke="#7a4a10" stroke-width="0.8"/></svg>
<svg class="abs" style="left:1275px;top:67px" width="24" height="24" viewBox="0 0 24 24"><path d="M3,18 L7,5 L22,3 L18,17 Z" fill="#e07878" stroke="#2050b0" stroke-width="1.600"/><path d="M6,9 l14,-2 M5,13 l14,-2 M11,4.500 l-4,13 M16,4 l-4,13" stroke="#fff" stroke-width="0.8"/></svg>
<div class="sep" style="left:12px"></div>
<div class="sep" style="left:264px"></div>
<div class="sep" style="left:593px"></div>
<div class="sep" style="left:869px"></div>
<div class="sep" style="left:1042px"></div>
<div class="sep" style="left:1137px"></div>
<div class="grp" style="left:136px">属性/过滤器</div>
<div class="grp" style="left:427px">图形</div>
<div class="grp" style="left:730px">图像 (进阶)</div>
<div class="grp" style="left:955px">视图</div>
<div class="grp" style="left:1089px">工作平面</div>
<div class="grp" style="left:1223px">系统</div>
<div class="abs" style="left:9px;top:108px;width:1911px;height:1px;background:#c0c8da"></div>
<div class="hgrip" style="top:122px"></div><div class="hgrip" style="top:374px"></div>
<svg class="abs" style="left:6px;top:132px" width="24" height="24" viewBox="0 0 24 24"><circle cx="14" cy="10" r="6" fill="#cfe2f8" stroke="#6a86a8" stroke-width="1.6"/><circle cx="12.5" cy="8.5" r="2.5" fill="#fff" opacity="0.8"/><path d="M9.5,14.5 L4,21" stroke="#888" stroke-width="3"/><path d="M5,6 q-3,4 0,8 M8,4 q-3,4 -1,9" stroke="#9aa" stroke-width="1.5" fill="none"/></svg>
<svg class="abs" style="left:6px;top:158px" width="24" height="24" viewBox="0 0 24 24"><rect x="6" y="7" width="12" height="10" fill="#e8eef8" stroke="#777" stroke-width="1"/><path d="M2,3 l5,1 l-4,4 Z M22,3 l-1,5 l-4,-4 Z M2,21 l1,-5 l4,4 Z M22,21 l-5,-1 l4,-4 Z" fill="#30c030" stroke="#107010" stroke-width="0.5"/></svg>
<svg class="abs" style="left:6px;top:184px" width="24" height="24" viewBox="0 0 24 24"><circle cx="14" cy="10" r="6" fill="#cfe2f8" stroke="#6a86a8" stroke-width="1.6"/><circle cx="12.5" cy="8.5" r="2.5" fill="#fff" opacity="0.8"/><path d="M9.5,14.5 L4,21" stroke="#888" stroke-width="3"/><path d="M5,6 q-3,4 0,8 M8,4 q-3,4 -1,9" stroke="#9aa" stroke-width="1.5" fill="none"/><path d="M2,4 h5 M4.500,1.500 v5" stroke="#000" stroke-width="1"/><path d="M14,14 l4,-2 l4,2 v5 l-4,2 l-4,-2 Z" fill="#777" stroke="#333" stroke-width="0.6"/><path d="M18,1 h6 l-3,3.500 Z" fill="#000"/></svg>
<svg class="abs" style="left:6px;top:210px" width="24" height="24" viewBox="0 0 24 24"><path d="M11,15 L3,9 L12,5 L21,10 Z" fill="#e0e4ee" stroke="#99a" stroke-width="0.6"/><path d="M11,15 V3" stroke="#2060e0" stroke-width="1.8"/><path d="M11,1 l-2.5,4 h5 Z" fill="#2060e0"/><path d="M11,15 L19,8" stroke="#20b020" stroke-width="1.8"/><path d="M11,15 L19,21" stroke="#e02020" stroke-width="1.8"/><path d="M21,22 l-4.5,-1 l3,-3 Z" fill="#e02020"/><circle cx="11" cy="15" r="1.6" fill="#fff" stroke="#555" stroke-width="0.6"/><path d="M18,1 h6 l-3,3.500 Z" fill="#000"/></svg>
<svg class="abs" style="left:6px;top:236px" width="24" height="24" viewBox="0 0 24 24"><path d="M4,5 h13 v3 h-13 Z M5,9 h13 v3 h-13 Z" fill="#d0d8f0" stroke="#446" stroke-width="0.7"/><ellipse cx="10" cy="16" rx="7.5" ry="5" fill="#e8d8b0" stroke="#654" stroke-width="0.8"/><circle cx="6.500" cy="15.5" r="1.6" fill="#e02020"/><circle cx="10" cy="18" r="1.6" fill="#2060e0"/><circle cx="13.500" cy="16" r="1.6" fill="#20b020"/><path d="M12,14 L21,4" stroke="#a05010" stroke-width="2"/><path d="M18,1 h6 l-3,3.500 Z" fill="#000"/></svg>
<svg class="abs" style="left:6px;top:261px" width="24" height="24" viewBox="0 0 24 24"><path d="M4,11 a8,7 0 0 1 14,-4 l2,-2 v7 h-7 l2.5,-2.5 a5,4.5 0 0 0 -8,2 Z" fill="#5a9ae0" stroke="#1c4a90" stroke-width="0.7"/><path d="M20,13 a8,7 0 0 1 -14,4 l-2,2 v-7 h7 l-2.5,2.5 a5,4.5 0 0 0 8,-2 Z" fill="#7ab4f0" stroke="#1c4a90" stroke-width="0.7"/><path d="M18,1 h6 l-3,3.500 Z" fill="#000"/></svg>
<svg class="abs" style="left:6px;top:287px" width="24" height="24" viewBox="0 0 24 24"><text x="11" y="19" font-size="20" font-weight="bold" font-family="Liberation Sans,sans-serif" fill="#4a78d0" stroke="#1c3a80" stroke-width="0.5" text-anchor="middle">?</text><path d="M18,1 h6 l-3,3.500 Z" fill="#000"/></svg>
<svg class="abs" style="left:6px;top:313px" width="24" height="24" viewBox="0 0 24 24"><path d="M6,7 h12 l-1.500,14 h-9 Z" fill="#bfe0f0" stroke="#3a6a8a" stroke-width="1"/><path d="M5,6 h14" stroke="#3a6a8a" stroke-width="1.6"/><path d="M9,6 l1,-3 l4,2 l-1,1" fill="#e8d040" stroke="#555" stroke-width="0.6"/><path d="M9,10 l1,8 M12,10 v8 M15,10 l-1,8" stroke="#6a9ab8" stroke-width="0.8"/><path d="M18,1 h6 l-3,3.500 Z" fill="#000"/></svg>
<svg class="abs" style="left:6px;top:339px" width="24" height="24" viewBox="0 0 24 24"><path d="M3,2 v18 M6,2 v18" stroke="#556" stroke-width="2"/><circle cx="13" cy="11" r="7" fill="none" stroke="#8a4a2a" stroke-width="1.2"/><path d="M13,2 v18 M4,11 h18 M7,5 l12,12 M19,5 l-12,12" stroke="#8a4a2a" stroke-width="1"/><circle cx="13" cy="11" r="2" fill="#f0c020"/><path d="M4,20 l10,-5 l6,2 l-10,5 Z" fill="#f08020" stroke="#f08020" stroke-width="0.5"/><path d="M6,20.500 l10,-5 M9,21.500 l10,-5" stroke="#fff" stroke-width="0.8"/><path d="M18,1 h6 l-3,3.500 Z" fill="#000"/></svg>
<svg class="abs" style="left:32px;top:132px" width="24" height="24" viewBox="0 0 24 24"><path d="M3,5 L18,20 M8,3 L21,16 M2,12 l8,8" stroke="#3a78e0" stroke-width="1.6" stroke-dasharray="5 2"/><path d="M4,21 L7,14 L18,3 L21,6 L10,17 Z" fill="#e8a020" stroke="#7a4a00" stroke-width="0.8"/><path d="M4,21 l1.2,-3 l2,2 Z" fill="#222"/><path d="M17,4 l3,3 l1.5,-1.5 l-3,-3 Z" fill="#e03030"/><path d="M18,1 h6 l-3,3.500 Z" fill="#000"/></svg>
<svg class="abs" style="left:32px;top:158px" width="24" height="24" viewBox="0 0 24 24"><path d="M4,8 q4,-6 8,0 t8,4 q-2,6 -8,2" stroke="#3a78e0" stroke-width="1.800" fill="none"/><path d="M4,21 L7,14 L18,3 L21,6 L10,17 Z" fill="#e8a020" stroke="#7a4a00" stroke-width="0.8"/><path d="M4,21 l1.2,-3 l2,2 Z" fill="#222"/><path d="M17,4 l3,3 l1.5,-1.5 l-3,-3 Z" fill="#e03030"/><path d="M18,1 h6 l-3,3.500 Z" fill="#000"/></svg>
<svg class="abs" style="left:32px;top:184px" width="24" height="24" viewBox="0 0 24 24"><rect x="4" y="5" width="14" height="14" fill="#fffef0" stroke="#e0d000" stroke-width="2"/><path d="M7,12 l4,5 l8,-11" stroke="#20a020" stroke-width="2.600" fill="none"/><path d="M18,1 h6 l-3,3.500 Z" fill="#000"/></svg>
<svg class="abs" style="left:32px;top:210px" width="24" height="24" viewBox="0 0 24 24"><path d="M3,14 q4,-14 9,-2 t9,-2" stroke="#3a78e0" stroke-width="1.800" fill="none"/><path d="M4,21 L7,14 L18,3 L21,6 L10,17 Z" fill="#e8a020" stroke="#7a4a00" stroke-width="0.8"/><path d="M4,21 l1.2,-3 l2,2 Z" fill="#222"/><path d="M17,4 l3,3 l1.5,-1.5 l-3,-3 Z" fill="#e03030"/><path d="M18,1 h6 l-3,3.500 Z" fill="#000"/></svg>
<svg class="abs" style="left:32px;top:236px" width="24" height="24" viewBox="0 0 24 24"><path d="M3,19 L8,6 L21,3 L17,17 Z" fill="#7ab0f0" stroke="#2050b0" stroke-width="1.400"/><path d="M5.500,12.500 l13.500,-3 M12,5 l-3,13 M16.500,4 l-3,13" stroke="#fff" stroke-width="1"/><path d="M18,1 h6 l-3,3.500 Z" fill="#000"/></svg>
<svg class="abs" style="left:32px;top:261px" width="24" height="24" viewBox="0 0 24 24"><path d="M4,8 l8,-4 l8,4 l-8,4 Z" fill="#d8d8d8" stroke="#444" stroke-width="0.8"/><path d="M4,8 v9 l8,4 v-9 Z" fill="#a8a8a8" stroke="#444" stroke-width="0.8"/><path d="M12,12 v9 l8,-4 v-9 Z" fill="#707070" stroke="#444" stroke-width="0.8"/><path d="M18,1 h6 l-3,3.500 Z" fill="#000"/></svg>
<svg class="abs" style="left:32px;top:287px" width="24" height="24" viewBox="0 0 24 24"><path d="M3,4 v17 M20,4 v17" stroke="#333" stroke-width="1.400"/><path d="M4,8 h15" stroke="#e0c000" stroke-width="2"/><path d="M4,8 l3,-2 v4 Z M19,8 l-3,-2 v4 Z" fill="#222"/><path d="M18,1 h6 l-3,3.500 Z" fill="#000"/></svg>
<svg class="abs" style="left:32px;top:313px" width="24" height="24" viewBox="0 0 24 24"><path d="M4,11 l7,-7 v4 q9,0 8,9 q0,3 -3,4 q3,-6 -5,-7 v4 Z" fill="#b8b8b8" stroke="#888" stroke-width="0.7"/><path d="M18,1 h6 l-3,3.500 Z" fill="#000"/></svg>
<svg class="abs" style="left:32px;top:339px" width="24" height="24" viewBox="0 0 24 24"><path d="M8,7 h9 l4,4 v11 h-13 Z" fill="#e8eef8" stroke="#000" stroke-width="1.3"/><path d="M2,6 h7 l1,2 h7 v9 h-15 Z" fill="#f0d070" stroke="#a08020" stroke-width="0.8"/><path d="M2,17 l3,-8 h15 l-3,8 Z" fill="#f8e498" stroke="#a08020" stroke-width="0.8"/><path d="M9,5 q4,-5 8,-1 l1.500,-1.500 v5.500 h-5.500 l1.500,-1.500 q-2,-2 -4,0 Z" fill="#30b030" stroke="#0a5a0a" stroke-width="0.5"/></svg>
<div class="vb" style="left:64px;top:113px"></div>
<svg class="abs" style="left:64px;top:113px" width="24" height="24" viewBox="0 0 24 24"><rect x="3" y="4" width="18" height="4" fill="#4a6290" stroke="#6a80a8" stroke-width="0.6"/><rect x="3" y="10" width="18" height="4" fill="#4a6290" stroke="#6a80a8" stroke-width="0.6"/><rect x="3" y="16" width="18" height="4" fill="#4a6290" stroke="#6a80a8" stroke-width="0.6"/></svg>
<div class="vb" style="left:92px;top:113px"></div>
<svg class="abs" style="left:92px;top:113px" width="24" height="24" viewBox="0 0 24 24"><rect x="6" y="7" width="12" height="10" fill="#e8eef8" stroke="#777" stroke-width="1"/><path d="M2,3 l5,1 l-4,4 Z M22,3 l-1,5 l-4,-4 Z M2,21 l1,-5 l4,4 Z M22,21 l-5,-1 l4,-4 Z" fill="#30c030" stroke="#107010" stroke-width="0.5"/></svg>
<div class="vb" style="left:120px;top:113px"></div>
<svg class="abs" style="left:120px;top:113px" width="24" height="24" viewBox="0 0 24 24"><circle cx="14" cy="10" r="6" fill="#cfe2f8" stroke="#6a86a8" stroke-width="1.6"/><circle cx="12.5" cy="8.5" r="2.5" fill="#fff" opacity="0.8"/><path d="M9.5,14.5 L4,21" stroke="#888" stroke-width="3"/><path d="M5,6 q-3,4 0,8 M8,4 q-3,4 -1,9" stroke="#9aa" stroke-width="1.5" fill="none"/></svg>
<div class="vb" style="left:148px;top:113px"></div>
<svg class="abs" style="left:148px;top:113px" width="24" height="24" viewBox="0 0 24 24"><path d="M11,15 L3,9 L12,5 L21,10 Z" fill="#e0e4ee" stroke="#99a" stroke-width="0.6"/><path d="M11,15 V3" stroke="#2060e0" stroke-width="1.8"/><path d="M11,1 l-2.5,4 h5 Z" fill="#2060e0"/><path d="M11,15 L19,8" stroke="#20b020" stroke-width="1.8"/><path d="M11,15 L19,21" stroke="#e02020" stroke-width="1.8"/><path d="M21,22 l-4.5,-1 l3,-3 Z" fill="#e02020"/><circle cx="11" cy="15" r="1.6" fill="#fff" stroke="#555" stroke-width="0.6"/></svg>
<div class="vb" style="left:176px;top:113px"></div>
<svg class="abs" style="left:176px;top:113px" width="24" height="24" viewBox="0 0 24 24"><defs><linearGradient id="gq" x1="0" y1="0" x2="1" y2="1"><stop offset="0" stop-color="#66e04a"/><stop offset="1" stop-color="#1c9a1c"/></linearGradient></defs><polygon points="3,6.7 13,3 21.8,6.3 11.8,10.3" fill="url(#gq)" stroke="#0a6a0a" stroke-width="0.6"/><path d="M13,3 L13,14.2 M3,17.5 L13,14.2 M13,14.2 L21.8,17.5" stroke="#000" stroke-width="0.9" fill="none"/><path d="M3,6.7 L13,3 L21.8,6.3 L11.8,10.3 Z M3,6.7 L3,17.5 L11.8,21.7 L21.8,17.5 L21.8,6.3 M11.8,10.3 L11.8,21.7" stroke="#000" stroke-width="1.25" fill="none" stroke-linejoin="round"/></svg>
<div class="vb" style="left:204px;top:113px"></div>
<svg class="abs" style="left:204px;top:113px" width="24" height="24" viewBox="0 0 24 24"><defs><linearGradient id="gq" x1="0" y1="0" x2="1" y2="1"><stop offset="0" stop-color="#66e04a"/><stop offset="1" stop-color="#1c9a1c"/></linearGradient></defs><polygon points="3,17.5 13,14.2 21.8,17.5 11.8,21.7" fill="url(#gq)" stroke="#0a6a0a" stroke-width="0.6"/><path d="M13,3 L13,14.2 M3,17.5 L13,14.2 M13,14.2 L21.8,17.5" stroke="#000" stroke-width="0.9" fill="none"/><path d="M3,6.7 L13,3 L21.8,6.3 L11.8,10.3 Z M3,6.7 L3,17.5 L11.8,21.7 L21.8,17.5 L21.8,6.3 M11.8,10.3 L11.8,21.7" stroke="#000" stroke-width="1.25" fill="none" stroke-linejoin="round"/></svg>
<div class="vb" style="left:232px;top:113px"></div>
<svg class="abs" style="left:232px;top:113px" width="24" height="24" viewBox="0 0 24 24"><defs><linearGradient id="gq" x1="0" y1="0" x2="1" y2="1"><stop offset="0" stop-color="#66e04a"/><stop offset="1" stop-color="#1c9a1c"/></linearGradient></defs><polygon points="3,6.7 13,3 13,14.2 3,17.5" fill="url(#gq)" stroke="#0a6a0a" stroke-width="0.6"/><path d="M13,3 L13,14.2 M3,17.5 L13,14.2 M13,14.2 L21.8,17.5" stroke="#000" stroke-width="0.9" fill="none"/><path d="M3,6.7 L13,3 L21.8,6.3 L11.8,10.3 Z M3,6.7 L3,17.5 L11.8,21.7 L21.8,17.5 L21.8,6.3 M11.8,10.3 L11.8,21.7" stroke="#000" stroke-width="1.25" fill="none" stroke-linejoin="round"/></svg>
<div class="vb" style="left:260px;top:113px"></div>
<svg class="abs" style="left:260px;top:113px" width="24" height="24" viewBox="0 0 24 24"><defs><linearGradient id="gq" x1="0" y1="0" x2="1" y2="1"><stop offset="0" stop-color="#66e04a"/><stop offset="1" stop-color="#1c9a1c"/></linearGradient></defs><polygon points="11.8,10.3 21.8,6.3 21.8,17.5 11.8,21.7" fill="url(#gq)" stroke="#0a6a0a" stroke-width="0.6"/><path d="M13,3 L13,14.2 M3,17.5 L13,14.2 M13,14.2 L21.8,17.5" stroke="#000" stroke-width="0.9" fill="none"/><path d="M3,6.7 L13,3 L21.8,6.3 L11.8,10.3 Z M3,6.7 L3,17.5 L11.8,21.7 L21.8,17.5 L21.8,6.3 M11.8,10.3 L11.8,21.7" stroke="#000" stroke-width="1.25" fill="none" stroke-linejoin="round"/></svg>
<div class="vb" style="left:288px;top:113px"></div>
<svg class="abs" style="left:288px;top:113px" width="24" height="24" viewBox="0 0 24 24"><defs><linearGradient id="gq" x1="0" y1="0" x2="1" y2="1"><stop offset="0" stop-color="#66e04a"/><stop offset="1" stop-color="#1c9a1c"/></linearGradient></defs><polygon points="3,6.7 11.8,10.3 11.8,21.7 3,17.5" fill="url(#gq)" stroke="#0a6a0a" stroke-width="0.6"/><path d="M13,3 L13,14.2 M3,17.5 L13,14.2 M13,14.2 L21.8,17.5" stroke="#000" stroke-width="0.9" fill="none"/><path d="M3,6.7 L13,3 L21.8,6.3 L11.8,10.3 Z M3,6.7 L3,17.5 L11.8,21.7 L21.8,17.5 L21.8,6.3 M11.8,10.3 L11.8,21.7" stroke="#000" stroke-width="1.25" fill="none" stroke-linejoin="round"/></svg>
<div class="vb" style="left:316px;top:113px"></div>
<svg class="abs" style="left:316px;top:113px" width="24" height="24" viewBox="0 0 24 24"><defs><linearGradient id="gq" x1="0" y1="0" x2="1" y2="1"><stop offset="0" stop-color="#66e04a"/><stop offset="1" stop-color="#1c9a1c"/></linearGradient></defs><polygon points="13,3 21.8,6.3 21.8,17.5 13,14.2" fill="url(#gq)" stroke="#0a6a0a" stroke-width="0.6"/><path d="M13,3 L13,14.2 M3,17.5 L13,14.2 M13,14.2 L21.8,17.5" stroke="#000" stroke-width="0.9" fill="none"/><path d="M3,6.7 L13,3 L21.8,6.3 L11.8,10.3 Z M3,6.7 L3,17.5 L11.8,21.7 L21.8,17.5 L21.8,6.3 M11.8,10.3 L11.8,21.7" stroke="#000" stroke-width="1.25" fill="none" stroke-linejoin="round"/></svg>
<div class="vb" style="left:344px;top:113px"></div>
<svg class="abs" style="left:344px;top:113px" width="24" height="24" viewBox="0 0 24 24"><path d="M3,6.700 L13,3 L21.800,6.300 L11.800,10.300 Z" fill="#5ee048" stroke="#0a7a0a" stroke-width="0.8"/><path d="M3,6.700 L11.800,10.300 L11.800,21.700 L3,17.500 Z" fill="#2fc62f" stroke="#0a7a0a" stroke-width="0.8"/><path d="M11.800,10.300 L21.800,6.300 L21.800,17.500 L11.800,21.700 Z" fill="#1c9a1c" stroke="#0a7a0a" stroke-width="0.8"/></svg>
<div class="vb" style="left:64px;top:141px"></div>
<svg class="abs" style="left:64px;top:141px" width="24" height="24" viewBox="0 0 24 24"><path d="M7.5,7.5 v10 a4.75,2.5 0 0 0 9.5,0 v-10" fill="none" stroke="#111" stroke-width="0.9"/><ellipse cx="12.25" cy="7.5" rx="4.75" ry="2.5" fill="none" stroke="#111" stroke-width="0.9"/></svg>
<div class="vb" style="left:64px;top:169px"></div>
<svg class="abs" style="left:64px;top:169px" width="24" height="24" viewBox="0 0 24 24"><path d="M7.5,7.5 v10 a4.75,2.5 0 0 0 9.5,0 v-10" fill="none" stroke="#111" stroke-width="0.9"/><ellipse cx="12.25" cy="7.5" rx="4.75" ry="2.5" fill="none" stroke="#111" stroke-width="0.9"/><path d="M7.500,17.500 a4.750,2.500 0 0 1 9.500,0" fill="none" stroke="#111" stroke-width="0.7"/></svg>
<div class="vb" style="left:64px;top:197px;background:#7a7a80;border-color:#e0b850;box-shadow:inset 0 0 0 1px #c8a040"></div>
<svg class="abs" style="left:64px;top:197px" width="24" height="24" viewBox="0 0 24 24"><defs><linearGradient id="bc" x1="0" x2="1"><stop offset="0" stop-color="#2e62b0"/><stop offset="0.45" stop-color="#7fb0ea"/><stop offset="1" stop-color="#1c4a90"/></linearGradient></defs><path d="M7.5,7.5 v10 a4.75,2.5 0 0 0 9.5,0 v-10" fill="url(#bc)" stroke="#123" stroke-width="0.9"/><ellipse cx="12.25" cy="7.5" rx="4.75" ry="2.5" fill="#8ab8ee" stroke="#123" stroke-width="0.9"/></svg>
<div class="vb" style="left:64px;top:225px"></div>
<svg class="abs" style="left:64px;top:225px" width="24" height="24" viewBox="0 0 24 24"><path d="M7.5,7.5 v10 a4.75,2.5 0 0 0 9.5,0 v-10" fill="#dfe8f8" stroke="#445" stroke-width="0.9"/><ellipse cx="12.25" cy="7.5" rx="4.75" ry="2.5" fill="#f4f8fe" stroke="#445" stroke-width="0.9"/></svg>
<div class="vb" style="left:64px;top:253px"></div>
<svg class="abs" style="left:64px;top:253px" width="24" height="24" viewBox="0 0 24 24"><path d="M7.5,7.5 v10 a4.75,2.5 0 0 0 9.5,0 v-10" fill="#9a9aa0" stroke="#111" stroke-width="0.9"/><ellipse cx="12.25" cy="7.5" rx="4.75" ry="2.5" fill="#b8b8c0" stroke="#111" stroke-width="0.9"/><path d="M9.500,8 l1.500,11 M12.200,8 v12 M15,8 l-1.500,11 M8,13 l8.500,2" stroke="#111" stroke-width="0.8" fill="none"/></svg>
<div class="abs" style="left:4px;top:1020px;width:1916px;height:1px;background:#8a8e98"></div>
<div class="abs" style="left:1340px;top:1004px;width:130px;height:15px;background:#fff"></div>
<div class="abs" style="left:1486px;top:1004px;font-size:12px;line-height:16px;white-space:nowrap">绝对 XY 上视图</div>
<div class="abs" style="left:1593px;top:1004px;width:1px;height:15px;background:#9aa0ae"></div>
<div class="abs" style="left:1727px;top:1004px;width:1px;height:15px;background:#9aa0ae"></div>
<div class="abs" style="left:1750px;top:1004px;width:1px;height:15px;background:#9aa0ae"></div>
<div class="abs" style="left:1798px;top:1004px;width:1px;height:15px;background:#9aa0ae"></div>
<div class="abs" style="left:1841px;top:1004px;width:1px;height:15px;background:#9aa0ae"></div>
<div class="abs" style="left:1885px;top:1004px;width:1px;height:15px;background:#9aa0ae"></div>
<div class="abs" style="left:1601px;top:1004px;font-size:12px;line-height:16px;white-space:nowrap">绝对视图</div>
<div class="abs" style="left:1657px;top:1004px;width:3px;height:14px;background-image:repeating-linear-gradient(to bottom,#8a8e98 0 1px,transparent 1px 3px)"></div>
<div class="abs" style="left:1668px;top:1004px;font-size:12px;line-height:16px;font-weight:bold;white-space:nowrap">LAYER0</div>
<div class="abs" style="left:1762px;top:1005px;width:32px;height:13px;background:#4a628c"></div>
<div class="abs" style="left:1804px;top:1005px;width:32px;height:13px;background:#4a628c"></div>
<div class="abs" style="left:1847px;top:1005px;width:32px;height:13px;background:#4a628c"></div>
<svg class="abs" style="left:1892px;top:1002px" width="17" height="17" viewBox="0 0 17 17"><circle cx="8.500" cy="8.500" r="7.500" fill="#2050c0" stroke="#0a1a4a" stroke-width="0.8"/><path d="M4,4 q3,-2 5,0 q1,3 -2,4 q-3,1 -3,-4 Z M9,9 q4,-1 4,2 q-1,3 -3,3 q-2,-2 -1,-5 Z" fill="#30c030"/><circle cx="6" cy="5.500" r="1.500" fill="#fff" opacity="0.6"/></svg>
<div class="abs" style="left:1132px;top:1024px;width:1px;height:14px;background:#9aa0ae"></div>
<div class="abs" style="left:1141px;top:1024px;font-size:12px;line-height:16px;white-space:nowrap">拴牢</div>
<div class="abs" style="left:1175px;top:1024px;width:1px;height:14px;background:#9aa0ae"></div>
<div class="abs" style="left:1206px;top:1024px;width:1px;height:14px;background:#9aa0ae"></div>
<div class="abs" style="left:1237px;top:1024px;width:1px;height:14px;background:#9aa0ae"></div>
<div class="abs" style="left:1268px;top:1024px;width:1px;height:14px;background:#9aa0ae"></div>
<div class="abs" style="left:1299px;top:1024px;width:1px;height:14px;background:#9aa0ae"></div>
<div class="abs" style="left:1330px;top:1024px;width:1px;height:14px;background:#9aa0ae"></div>
<svg class="abs" style="left:1181px;top:1022px" width="18" height="18" viewBox="0 0 18 18"><rect x="2" y="2" width="14" height="14" fill="#e8b8b8" stroke="#b03030" stroke-width="1.4"/><path d="M5,9 a4,4 0 0 1 7,-2.500 l1.500,-1 v4 h-4 l1.200,-1.200 a2.500,2.500 0 0 0 -4,1 Z M13,9.500 a4,4 0 0 1 -7,2.500 l-1.500,1 v-4 h4 l-1.200,1.200 a2.500,2.500 0 0 0 4,-1 Z" fill="#d04040"/></svg>
<div class="abs" style="left:1211px;top:1022px;width:20px;height:18px;background:#fbd46a"></div>
<svg class="abs" style="left:1212px;top:1022px" width="18" height="18" viewBox="0 0 18 18"><rect x="3" y="2" width="9" height="9" fill="#d070d0" stroke="#803080" stroke-width="0.8" transform="rotate(-15 8 6)"/><path d="M9,8 l7,8 l-2.500,0.500 l-1,2.500 Z" fill="#f8e8b0" stroke="#444" stroke-width="0.7"/></svg>
<svg class="abs" style="left:1243px;top:1022px" width="18" height="18" viewBox="0 0 18 18"><path d="M2,8 l7,-5 l7,5 v8 h-14 Z" fill="#e8d8b0" stroke="#654" stroke-width="0.8"/><rect x="4" y="9" width="6" height="7" fill="#4a78c8"/><path d="M10,3 q4,-2 6,2" stroke="#c07020" stroke-width="1.600" fill="none"/></svg>
<svg class="abs" style="left:1274px;top:1022px" width="18" height="18" viewBox="0 0 18 18"><text x="9" y="15" font-size="17" font-weight="bold" font-family="Liberation Sans,sans-serif" fill="#3a68c8" text-anchor="middle">?</text></svg>
<svg class="abs" style="left:1305px;top:1022px" width="18" height="18" viewBox="0 0 18 18"><path d="M7,8 l5,-3 l5,3 v6 l-5,3 l-5,-3 Z" fill="#5a8ad0" stroke="#123" stroke-width="0.8"/><path d="M7,8 l5,3 l5,-3 M12,11 v6" stroke="#123" stroke-width="0.8" fill="none"/><path d="M1,4 l7,5 M1,9 h6 M2,14 l6,-4" stroke="#e02020" stroke-width="1.600"/></svg>
<div class="abs" style="left:1335px;top:1022px;width:20px;height:18px;background:#fbd46a"></div>
<svg class="abs" style="left:1336px;top:1022px" width="18" height="18" viewBox="0 0 18 18"><path d="M2,7 l7,-4 l7,4 v7 l-7,4 l-7,-4 Z" fill="#b070e0" stroke="#123" stroke-width="0.9"/><path d="M2,7 l7,4 l7,-4 l-7,-4 Z" fill="#f0d060" stroke="#123" stroke-width="0.9"/><path d="M9,11 v7" stroke="#123" stroke-width="0.9"/><path d="M9,11 l7,-4 v7 l-7,4 Z" fill="#40c8e0" stroke="#123" stroke-width="0.9"/></svg>
<div class="abs" style="left:1376px;top:1030px;width:10px;height:9px;border:1px solid #444"></div>
<svg class="abs" style="left:1398px;top:1026px" width="18" height="14"><circle cx="9" cy="6" r="7" fill="none" stroke="#20a020" stroke-width="2"/></svg>
<div class="abs" style="left:1436px;top:1030px;width:14px;height:9px;border:1px solid #444"></div>
<div class="abs" style="left:1463px;top:1024px;font-size:12px;line-height:16px;white-space:nowrap">LS: 1.00 PS: 1.00</div>
<div class="abs" style="left:1580px;top:1024px;width:1px;height:14px;background:#9aa0ae"></div>
<div class="abs" style="left:1654px;top:1024px;width:1px;height:14px;background:#9aa0ae"></div>
<div class="abs" style="left:1589px;top:1024px;font-size:12px;line-height:16px;white-space:nowrap">单位: 毫米</div>
<div class="abs" style="left:1663px;top:1024px;font-size:12.5px;line-height:16px;white-space:nowrap;color:#e01010;letter-spacing:0.22px">X =-1015.566 Y =-0179.998 <span style="color:#000">Z = 0684.700</span></div>
<div class="abs" style="left:1374px;top:1006px;width:193px;height:28px;background:#fff;border-radius:4px;box-shadow:0 0 2px rgba(0,0,0,.35)"></div>
<svg class="abs" style="left:1358px;top:1004px" width="30" height="32" viewBox="0 0 30 32"><rect x="2" y="3" width="25" height="25" rx="6" fill="#f04a1a" transform="rotate(-10 15 16)"/><text x="14.500" y="24" font-size="24" font-weight="bold" font-family="Liberation Sans,sans-serif" fill="#fff" text-anchor="middle" transform="rotate(-8 15 16)">S</text></svg>
<div class="abs" style="left:1391px;top:1010px;font-size:17px;line-height:20px;color:#1a6ae0;font-weight:bold">中</div>
<svg class="abs" style="left:1414px;top:1008px" width="152" height="26" viewBox="0 0 152 26" fill="none" stroke="#1a6ae0" stroke-width="1.8"><circle cx="3.500" cy="9" r="1.500" fill="#1a6ae0" stroke="none"/><path d="M9,13 q2,2 -1,5" /><circle cx="8.500" cy="12.500" r="1.500" fill="#1a6ae0" stroke="none"/><circle cx="30" cy="13" r="7.500"/><circle cx="27.500" cy="11" r="0.600" fill="#1a6ae0"/><circle cx="32.500" cy="11" r="0.600" fill="#1a6ae0"/><path d="M26.500,15 q3.500,3.500 7,0" stroke-width="1.400"/><rect x="49.500" y="5" width="5" height="10" rx="2.500" fill="#1a6ae0"/><path d="M46.500,12 q0,6 5.500,6 q5.500,0 5.500,-6 M52,18 v4" /><rect x="65" y="7" width="18" height="12" rx="2" fill="#1a6ae0" stroke="none"/><path d="M68,10.500 h2 M72,10.500 h2 M76,10.500 h2 M68,14 h2 M72,14 h2 M76,14 h2 M70,17 h8" stroke="#fff" stroke-width="1.400"/><circle cx="97" cy="9" r="3.500" fill="#b8c0cc" stroke="none"/><path d="M90,21 q0,-8 7,-8 q7,0 7,8 Z" fill="#b8c0cc" stroke="none"/><circle cx="103" cy="17" r="3.500" fill="#c8ced8" stroke="#fff" stroke-width="1"/><path d="M111,8 l4,-3 q3,3 6,0 l4,3 l-2.500,4 l-2,-1 v10 h-5 v-10 l-2,1 Z" fill="#1a6ae0" stroke="none"/><rect x="133" y="5" width="7" height="7" fill="#1a6ae0" stroke="none"/><rect x="142" y="5" width="7" height="7" rx="3.500" fill="#1a6ae0" stroke="none"/><rect x="133" y="14" width="7" height="7" fill="#1a6ae0" stroke="none"/><rect x="142" y="14" width="7" height="7" fill="#1a6ae0" stroke="none"/></svg>
<div class="abs" style="left:48px;top:1040px;width:344px;height:8px;background:#f0f0f0;border-top:1px solid #c8c8c8"></div>
<div class="abs" style="left:589px;top:1040px;width:48px;height:8px;background:#4c4c4c"></div>
<div class="abs" style="left:1815px;top:1042px;font-size:12px;line-height:14px;color:#fff;white-space:nowrap">15:30</div>
</body>
</html>
